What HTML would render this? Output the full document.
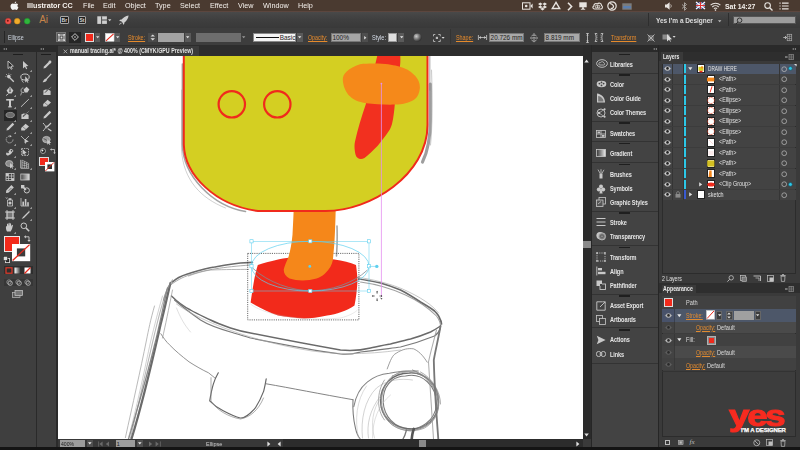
<!DOCTYPE html><html><head><meta charset="utf-8"><style>
*{margin:0;padding:0;box-sizing:border-box}
html,body{width:800px;height:450px;overflow:hidden;background:#161616;font-family:"Liberation Sans",sans-serif;}
.a{position:absolute}
.t{line-height:1;white-space:nowrap}
svg{position:absolute;overflow:visible}
</style></head><body>
<div class="a" style="left:0px;top:0px;width:800px;height:11px;background:#4a3a30"></div>
<div class="a" style="left:0px;top:11px;width:800px;height:17px;background:linear-gradient(#4a4a4a,#3f3f3f 50%,#393939)"></div>
<div class="a" style="left:0px;top:10.5px;width:800px;height:1px;background:#5c463e"></div>
<div class="a" style="left:0px;top:27.5px;width:800px;height:0.8px;background:#2a2a2a"></div>
<div class="a" style="left:0px;top:28px;width:800px;height:17px;background:#3d3d3d"></div>
<div class="a" style="left:0px;top:45px;width:800px;height:7px;background:#2a2a2a"></div>
<div class="a" style="left:0px;top:52px;width:35.5px;height:395px;background:#3f3f3f"></div>
<div class="a" style="left:35.5px;top:52px;width:1.5px;height:395px;background:#2a2a2a"></div>
<div class="a" style="left:37px;top:52px;width:19px;height:395px;background:#3f3f3f"></div>
<div class="a" style="left:56px;top:45px;width:1.5px;height:402px;background:#2a2a2a"></div>
<div class="a" style="left:57.5px;top:45px;width:525.5px;height:11px;background:#2d2d2d"></div>
<div class="a" style="left:57.6px;top:46.2px;width:141.4px;height:9.8px;background:#3b3b3b"></div>
<svg style="left:62.6px;top:48.6px" width="5" height="5"><path d="M.6 .6 L4.2 4.2 M4.2 .6 L.6 4.2" stroke="#bdbdbd" stroke-width=".8"/></svg>
<div class="a t" style="left:70px;top:48.1px;font-size:6.5px;color:#e2e2e2;font-weight:bold;transform:scaleX(.82);transform-origin:0 0">manual tracing.ai* @ 400% (CMYK/GPU Preview)</div>
<div class="a" id="canvas" style="left:57.5px;top:56px;width:525.5px;height:383px;background:#fff;overflow:hidden">
<svg style="left:0;top:0" width="525.5" height="383" viewBox="57.5 56 525.5 383">
<defs><filter id="soft" x="-5%" y="-5%" width="110%" height="110%"><feGaussianBlur stdDeviation="0.45"/></filter></defs>
<g filter="url(#soft)">
<path d="M429.8 84 V120 C429.8 138 428 150 422 162" fill="none" stroke="#6a6a6a" stroke-width="3.12" stroke-opacity="0.65" stroke-linecap="round"/>
<path d="M429.3 56 V90" fill="none" stroke="#888" stroke-width="1.30" stroke-opacity="0.6" stroke-linecap="round"/>
<path d="M431 70 C432 100 432 125 430 145" fill="none" stroke="#999" stroke-width="1.04" stroke-opacity="0.5" stroke-linecap="round"/>
<path d="M181.9 64 V144.5 C182.6 176 212 206 245 211.5" fill="none" stroke="#666" stroke-width="1.56" stroke-opacity="0.6" stroke-linecap="round"/>
<path d="M181 90 V150 C183 180 200 198 225 208" fill="none" stroke="#999" stroke-width="0.91" stroke-opacity="0.5" stroke-linecap="round"/>
<path d="M172 282 C178 276 184 275 190 273 C200 270 207 268 214 267 C225 265 233 263.5 240 263 L252 262.4" fill="none" stroke="#6a6a6a" stroke-width="1.56" stroke-opacity="1" stroke-linecap="round"/>
<path d="M170 285 C178 279 185 276 192 274 C205 270 222 267 250 265" fill="none" stroke="#8a8a8a" stroke-width="0.91" stroke-opacity="0.8" stroke-linecap="round"/>
<path d="M188 276 C196 273 203 271 210 270 C225 269.5 238 269.4 248 269.4" fill="none" stroke="#9a9a9a" stroke-width="0.91" stroke-opacity="0.8" stroke-linecap="round"/>
<path d="M358 279 C366 280 373 281.5 380 283 C387 285 394 287.5 400 290 C408 294 414 298 420 302 C426 305.5 431 308.5 434 311 C437 314 438.5 316 439 318 C440.5 320.5 441 322 441 324" fill="none" stroke="#6a6a6a" stroke-width="1.69" stroke-opacity="1" stroke-linecap="round"/>
<path d="M360 282 C375 284 392 289 405 295 C418 301 428 308 436 316 C439 320 440.5 324 440 328" fill="none" stroke="#888" stroke-width="1.04" stroke-opacity="0.8" stroke-linecap="round"/>
<path d="M355 277 C372 279 390 284 402 289 C420 297 432 305 438 313" fill="none" stroke="#999" stroke-width="0.78" stroke-opacity="0.7" stroke-linecap="round"/>
<path d="M171 296 C176 301 182 306 190 310 C197 314 204 317 210 320 C216 323 223 325.5 230 328 C236 330 244 332 250 333 C270 337 300 343 340 350 C350 351 360 350.5 370 348 C377 346.5 383 345 390 344 C397 342 404 340.5 410 339 C417 337 424 334.5 430 332 C434 330 437 328 440 326" fill="none" stroke="#6a6a6a" stroke-width="1.43" stroke-opacity="1" stroke-linecap="round"/>
<path d="M174 300 C182 307 190 313 200 320 C208 325 218 328.5 230 332 C236 334 244 336 250 338 C275 343 310 350 340 354 C350 355 356 353 360 352 C375 350.5 388 348.5 400 347 C412 344 424 340 434 336 C437 334 439 331 440 328" fill="none" stroke="#7a7a7a" stroke-width="1.17" stroke-opacity="1" stroke-linecap="round"/>
<path d="M176 304 C195 318 240 338 300 349 C330 355 365 355 400 350" fill="none" stroke="#aaa" stroke-width="0.78" stroke-opacity="0.8" stroke-linecap="round"/>
<path d="M170 283 C167 295 164 310 160 325 C152 360 143 400 131 438.8" fill="none" stroke="#6a6a6a" stroke-width="2.21" stroke-opacity="1" stroke-linecap="round"/>
<path d="M167 288 C163 305 158 330 154 345 C147 375 138 405 128 439" fill="none" stroke="#7a7a7a" stroke-width="1.30" stroke-opacity="0.9" stroke-linecap="round"/>
<path d="M154 306 C150 320 148 330 146 340 C140 370 132 405 124.9 437.6" fill="none" stroke="#aaa" stroke-width="0.91" stroke-opacity="0.9" stroke-linecap="round"/>
<path d="M172 290 C168 310 165 325 162 338" fill="none" stroke="#999" stroke-width="0.91" stroke-opacity="0.8" stroke-linecap="round"/>
<path d="M168 286 C162 300 158 318 154 334 C148 360 140 395 130 438" fill="none" stroke="#888" stroke-width="1.04" stroke-opacity="0.6" stroke-linecap="round"/>
<path d="M162 296 C158 310 154 325 150 342 C145 365 138 400 128 438" fill="none" stroke="#aaa" stroke-width="0.91" stroke-opacity="0.6" stroke-linecap="round"/>
<path d="M172 280 C168 286 165 292 163 300" fill="none" stroke="#888" stroke-width="1.30" stroke-opacity="0.7" stroke-linecap="round"/>
<path d="M160.3 333.7 C163 338 166 342 168.9 344.7 C175 351 181 356 188.5 361.8 C195 366 202 370 208 372.8 L214.1 377.7" fill="none" stroke="#888" stroke-width="0.91" stroke-opacity="1" stroke-linecap="round"/>
<path d="M176 308 C180 318 184 325 190 332" fill="none" stroke="#bbb" stroke-width="0.65" stroke-opacity="0.7" stroke-linecap="round"/>
<path d="M217.8 372.8 C216 376 214 380 212.9 383.8 C211 390 210 396 209.2 400.9 C213 405 217 408 222.7 410.7 C228 413.5 234 416.5 239.8 418 C245 418.5 250 413 254.7 408.2 C258 403 261 397 263.2 391.1 C264.5 386 265.2 382 265.7 378.9" fill="none" stroke="#666" stroke-width="1.17" stroke-opacity="1" stroke-linecap="round"/>
<path d="M210.5 377.7 C210.5 385 210.5 393 210.5 400.9 C216 410 228 417 240 419 C250 417 258 410 263 398" fill="none" stroke="#8a8a8a" stroke-width="0.78" stroke-opacity="0.9" stroke-linecap="round"/>
<path d="M265.7 383.8 C290 388 320 394 352.5 399.7" fill="none" stroke="#777" stroke-width="0.91" stroke-opacity="1" stroke-linecap="round"/>
<path d="M409 373 C425 372 438 385 438 402 C438 418 425 430 409 429 C392 428 380 416 380 401 C380 385 392 373 409 373Z" fill="none" stroke="#5a5a5a" stroke-width="1.30" stroke-opacity="0.9" stroke-linecap="round"/>
<path d="M405 376 C422 372 436 386 436 404 C435 420 420 432 404 428 C390 425 381 412 383 396 C385 382 395 376 405 376Z" fill="none" stroke="#6a6a6a" stroke-width="1.04" stroke-opacity="0.9" stroke-linecap="round"/>
<path d="M412 370 C428 376 440 392 437 410 C434 424 420 432 405 430" fill="none" stroke="#777" stroke-width="0.91" stroke-opacity="0.9" stroke-linecap="round"/>
<path d="M400 372 C388 376 378 392 382 410 C386 424 396 430 410 431" fill="none" stroke="#888" stroke-width="0.78" stroke-opacity="0.8" stroke-linecap="round"/>
<path d="M352.5 399.7 C352 410 353 420 354.9 427.8 C356 433 358 437 359.8 439" fill="none" stroke="#777" stroke-width="1.04" stroke-opacity="1" stroke-linecap="round"/>
<path d="M353.3 406.7 C356 392 362 386 366.7 382.2 C374 376 382 374 388.9 373.3 C400 371 410 371 417.8 371.1" fill="none" stroke="#777" stroke-width="1.04" stroke-opacity="0.9" stroke-linecap="round"/>
<path d="M386.7 368.9 C390 360 392 355 395.6 353.3 C402 349 408 348 413.3 348.9 C420 352 424 358 426.7 362.2" fill="none" stroke="#888" stroke-width="0.91" stroke-opacity="0.9" stroke-linecap="round"/>
<path d="M362 438 C360 420 364 400 376 388 C386 380 400 378 412 380" fill="none" stroke="#aaa" stroke-width="0.65" stroke-opacity="0.8" stroke-linecap="round"/>
<path d="M392 376 C405 368 425 372 434 388 C442 404 438 420 424 428 C410 434 392 430 384 416 C378 404 380 386 392 376Z" fill="none" stroke="#8a8a8a" stroke-width="0.91" stroke-opacity="0.8" stroke-linecap="round"/>
<path d="M398 372 C415 366 433 378 438 396 C441 414 430 428 412 430 C396 430 384 420 381 404" fill="none" stroke="#999" stroke-width="0.78" stroke-opacity="0.8" stroke-linecap="round"/>
<path d="M384 380 C376 392 376 410 384 420 M420 372 C432 378 440 392 440 404" fill="none" stroke="#777" stroke-width="0.78" stroke-opacity="0.8" stroke-linecap="round"/>
<path d="M358 438 C354 420 356 400 366 386 M374 438 C370 424 372 410 380 398" fill="none" stroke="#bbb" stroke-width="0.65" stroke-opacity="0.8" stroke-linecap="round"/>
<path d="M368 438 C366 425 369 410 380 396" fill="none" stroke="#aaa" stroke-width="0.65" stroke-opacity="0.8" stroke-linecap="round"/>
<path d="M372 438 C372 420 378 405 390 395" fill="none" stroke="#bbb" stroke-width="0.65" stroke-opacity="0.7" stroke-linecap="round"/>
<path d="M440 326 C438 338 435 350 433.3 360 C434 390 436 415 437.8 439" fill="none" stroke="#777" stroke-width="1.82" stroke-opacity="1" stroke-linecap="round"/>
<path d="M436 330 C433 342 430 352 428 362 C430 395 432 420 433 439" fill="none" stroke="#999" stroke-width="1.04" stroke-opacity="0.8" stroke-linecap="round"/>
<path d="M413.3 428.9 C412 432 411.5 436 411.1 440" fill="none" stroke="#555" stroke-width="2.60" stroke-opacity="1" stroke-linecap="round"/>
<path d="M406 430 C405 434 404 437 402 440" fill="none" stroke="#777" stroke-width="1.30" stroke-opacity="1" stroke-linecap="round"/>
</g>
<path d="M336.5 226 C336.8 235 336.8 245 336 256" fill="none" stroke="#666" stroke-width="1.56" stroke-opacity="0.6" stroke-linecap="round"/>
<path d="M257.3 265 C270 261 280 258.5 290 257.5 C305 256.5 320 257.5 334 259.5 C342 260.5 350 262.5 355.5 265 C356.5 272 357 278 357 281 C356.5 290 355.5 298 354 305.4 C346 311 336 314 326.6 315.5 C318 317.5 310 318.4 303.5 318.4 C294 318 285 317 277.5 315.5 C268 312 258 307 250.1 302.5 C251 296 252 290 253 283.8 C254 277 255.5 271 257.3 265Z" fill="#f22a1b"/>
<rect x="247.2" y="253.4" width="111.2" height="66.5" fill="none" stroke="#222" stroke-width=".7" stroke-dasharray="1.1 1.1"/>
<path d="M293.4 205 C293 215 292.5 225 292 234.7 C291 245 289.5 252 287.7 257.8 C286 262 284 266 283.3 269.3 C283 273 285 276.5 289 278.5 C295 280.5 302 280.8 309 280 C316 279 321 277 325 273 C329 269 331.5 265 332.4 260 C333 253 333.5 248 333.9 243.3 C334.5 232 335 220 335.3 205Z" fill="#f5871a"/>
<path d="M183.3 40 V144.5 C184 175 215 205.5 257.5 211 H325 C370 211 427 175 427 125 V40Z" fill="#d4cf22" stroke="#f02a1c" stroke-width="2"/>
<circle cx="231.3" cy="104.3" r="13.2" fill="none" stroke="#f02a1c" stroke-width="2.2"/>
<circle cx="276.8" cy="104.3" r="13.2" fill="none" stroke="#f02a1c" stroke-width="2.2"/>
<path d="M378 50 L399.5 50 C400 58 400 62 399.5 66 L394.3 104.3 C393.8 110 393 118 391.5 124 C390.5 127 389.5 129.5 388 131.5 C385 136 381 141 377 146 C372 151 368 155 364 158 C360 160.5 356 158.5 355 154.5 C353.8 149 353.8 145 354.4 142 C357 130 361 117 365.3 104.3 L367 96 C370 82 375 65 378 50Z" fill="#f2301f"/>
<path d="M342.3 79.4 C342 74 348 68 359.5 64.2 C365 63.5 372 63.5 377.8 63.6 C388 64 394 65.5 398.6 66.6 C405 68.5 410 71 413.2 74.6 C417 78 419.5 82 419.4 88 C419 93 417 97 414.5 99 C410 102.5 403 104.5 393.7 104.6 C384 104.8 374 104.2 365.6 103.3 C358 102 353 100 349.7 96.6 C345 92 342.6 86 342.3 79.4Z" fill="#f5891a"/>
<path d="M252 268 C268 283 292 290.5 310 290.8 C330 290.5 352 284 367 270" fill="none" stroke="#7d8c96" stroke-width=".8"/>
<path d="M250 304 C262 314 300 322 340 318 C348 316 354 313 357 310" fill="none" stroke="#b8b8b8" stroke-width=".6" stroke-opacity=".5"/>
<ellipse cx="309.8" cy="266.2" rx="58.8" ry="24.9" fill="none" stroke="#5fd0ef" stroke-width=".7"/>
<rect x="251" y="241.3" width="117.5" height="49.7" fill="none" stroke="#5fd0ef" stroke-width=".6" stroke-opacity=".85"/>
<rect x="249.4" y="239.70000000000002" width="3.2" height="3.2" fill="#fff" stroke="#5fd0ef" stroke-width=".6"/>
<rect x="308.2" y="239.70000000000002" width="3.2" height="3.2" fill="#fff" stroke="#5fd0ef" stroke-width=".6"/>
<rect x="366.9" y="239.70000000000002" width="3.2" height="3.2" fill="#fff" stroke="#5fd0ef" stroke-width=".6"/>
<rect x="249.4" y="264.59999999999997" width="3.2" height="3.2" fill="#fff" stroke="#5fd0ef" stroke-width=".6"/>
<rect x="366.9" y="264.59999999999997" width="3.2" height="3.2" fill="#fff" stroke="#5fd0ef" stroke-width=".6"/>
<rect x="249.4" y="289.4" width="3.2" height="3.2" fill="#fff" stroke="#5fd0ef" stroke-width=".6"/>
<rect x="308.2" y="289.4" width="3.2" height="3.2" fill="#fff" stroke="#5fd0ef" stroke-width=".6"/>
<rect x="366.9" y="289.4" width="3.2" height="3.2" fill="#fff" stroke="#5fd0ef" stroke-width=".6"/>
<circle cx="309.3" cy="266.4" r="1.4" fill="#5fd0ef"/>
<path d="M368.5 266.4 H375" stroke="#5fd0ef" stroke-width=".6"/><circle cx="376.3" cy="266.4" r="1.7" fill="#5fd0ef"/>
<path d="M380.9 83.4 V297" stroke="#e58ff0" stroke-width=".8"/><circle cx="380.9" cy="83.6" r=".9" fill="#e58ff0"/>
<g stroke="#333" stroke-width=".6"><path d="M376.6 291.5 V293.8 M376.6 298.2 V300.5 M372 296 H374.3 M378.9 296 H381.2"/></g><path d="M376.6 290.8 L375.7 292.2 H377.5Z M376.6 301.2 L375.7 299.8 H377.5Z M371.3 296 L372.7 295.1 V296.9Z M381.9 296 L380.5 295.1 V296.9Z" fill="#333"/><path d="M379.6 297.6 L382 298.8 L381 299.6Z" fill="#333"/>
</svg>
</div>
<div class="a" style="left:583px;top:45px;width:8px;height:394px;background:#2b2b2b"></div>
<div class="a" style="left:57.5px;top:439px;width:525.5px;height:8px;background:#383838"></div>
<div class="a" style="left:583px;top:439px;width:8px;height:8px;background:#3a3a3a"></div>
<div class="a" style="left:0px;top:447px;width:800px;height:3px;background:#141414"></div>
<div class="a" style="left:591px;top:45px;width:1px;height:402px;background:#262626"></div>
<div class="a" style="left:592px;top:52px;width:66px;height:395px;background:#434343"></div>
<div class="a" style="left:658px;top:45px;width:1px;height:402px;background:#262626"></div>
<div class="a" style="left:659px;top:52px;width:141px;height:395px;background:#3a3a3a"></div>
<svg style="left:10px;top:1px" width="9" height="10" viewBox="0 0 9 10"><path d="M4.6 2.3 C4.6 1.3 5.3 .5 6.2 .4 C6.3 1.4 5.5 2.3 4.6 2.3Z M4.5 2.8 C5.2 2.8 5.7 2.4 6.4 2.4 C7.1 2.4 7.8 2.8 8.1 3.4 C7.2 3.9 7.1 5.6 8.4 6.2 C8.1 7.2 7.4 8.9 6.4 8.9 C5.7 8.9 5.4 8.5 4.6 8.5 C3.8 8.5 3.4 8.9 2.8 8.9 C1.7 8.9 .5 7 .5 5.3 C.5 3.6 1.6 2.5 2.7 2.5 C3.4 2.5 3.9 2.8 4.5 2.8Z" fill="#f4f4f4"/></svg>
<div class="a t" style="left:27.1px;top:2.0px;font-size:7.6px;color:#f4f0ec;font-weight:bold;transform:scaleX(.95);transform-origin:0 0">Illustrator CC</div>
<div class="a t" style="left:82.8px;top:2.0px;font-size:7.6px;color:#f4f0ec;font-weight:normal;transform:scaleX(.95);transform-origin:0 0">File</div>
<div class="a t" style="left:103px;top:2.0px;font-size:7.6px;color:#f4f0ec;font-weight:normal;transform:scaleX(.95);transform-origin:0 0">Edit</div>
<div class="a t" style="left:124.6px;top:2.0px;font-size:7.6px;color:#f4f0ec;font-weight:normal;transform:scaleX(.95);transform-origin:0 0">Object</div>
<div class="a t" style="left:155.4px;top:2.0px;font-size:7.6px;color:#f4f0ec;font-weight:normal;transform:scaleX(.95);transform-origin:0 0">Type</div>
<div class="a t" style="left:180.3px;top:2.0px;font-size:7.6px;color:#f4f0ec;font-weight:normal;transform:scaleX(.95);transform-origin:0 0">Select</div>
<div class="a t" style="left:210px;top:2.0px;font-size:7.6px;color:#f4f0ec;font-weight:normal;transform:scaleX(.95);transform-origin:0 0">Effect</div>
<div class="a t" style="left:237.9px;top:2.0px;font-size:7.6px;color:#f4f0ec;font-weight:normal;transform:scaleX(.95);transform-origin:0 0">View</div>
<div class="a t" style="left:263.2px;top:2.0px;font-size:7.6px;color:#f4f0ec;font-weight:normal;transform:scaleX(.95);transform-origin:0 0">Window</div>
<div class="a t" style="left:298px;top:2.0px;font-size:7.6px;color:#f4f0ec;font-weight:normal;transform:scaleX(.95);transform-origin:0 0">Help</div>
<svg style="left:522px;top:2px" width="11" height="8" viewBox="0 0 11 8"><rect x=".5" y=".8" width="7.5" height="6.4" fill="none" stroke="#e8e4e0" stroke-width="1"/><circle cx="4.2" cy="4" r="1.3" fill="#e8e4e0"/><path d="M8.3 4 L10.6 1.6 V6.4Z" fill="#e8e4e0"/></svg>
<svg style="left:537.5px;top:1.5px" width="9" height="9" viewBox="0 0 9 9"><path d="M2.3 .5 L4.5 2 L2.3 3.5 L0 2Z M6.7 .5 L9 2 L6.7 3.5 L4.5 2Z M2.3 3.5 L4.5 5 L2.3 6.5 L0 5Z M6.7 3.5 L9 5 L6.7 6.5 L4.5 5Z M4.5 5.6 L6.6 7 L4.5 8.4 L2.4 7Z" fill="#e8e4e0"/></svg>
<svg style="left:551.5px;top:2px" width="8" height="7" viewBox="0 0 8 7"><path d="M4 .3 L7.7 6.5 H.3Z" fill="none" stroke="#e8e4e0" stroke-width="1.4"/></svg>
<svg style="left:566.5px;top:1.5px" width="6" height="9" viewBox="0 0 6 9"><path d="M1 .8 L4.6 4.5 L1 8.2" fill="none" stroke="#e8e4e0" stroke-width="1.6"/></svg>
<svg style="left:578.5px;top:2px" width="8" height="8" viewBox="0 0 8 8"><rect x=".3" y=".3" width="7.4" height="5" fill="#e8e4e0"/><rect x="3" y="5.3" width="2" height="1.6" fill="#e8e4e0"/><rect x="1.8" y="6.8" width="4.4" height=".9" fill="#e8e4e0"/></svg>
<svg style="left:591.5px;top:2px" width="11" height="8" viewBox="0 0 11 8"><path d="M2.5 7 C.6 7 .3 4.6 1.8 3.9 C1.8 1.8 4 .8 5.4 2 C6.6 .4 9.6 1 9.5 3.6 C11 4.2 10.6 7 8.7 7Z" fill="none" stroke="#e8e4e0" stroke-width="1.1"/><circle cx="4.6" cy="4.6" r="1.3" fill="none" stroke="#e8e4e0" stroke-width=".9"/><circle cx="6.6" cy="4.6" r="1.3" fill="none" stroke="#e8e4e0" stroke-width=".9"/></svg>
<svg style="left:607px;top:1.2px" width="10" height="10" viewBox="0 0 10 10"><circle cx="5" cy="5" r="4.2" fill="none" stroke="#e8e4e0" stroke-width="1.2"/><path d="M3 2.5 C5 3 6.5 3.5 6.5 5.5 C6.5 7 5 7.8 3.6 7.2" fill="none" stroke="#e8e4e0" stroke-width="1.2"/></svg>
<svg style="left:622px;top:2.5px" width="10" height="7" viewBox="0 0 10 7"><rect x=".3" y=".3" width="9.4" height="6.4" fill="#7c7c7c"/><rect x="1.2" y="3" width="7.6" height="2.4" fill="#5b7fb0"/></svg>
<svg style="left:665px;top:2px" width="7" height="8" viewBox="0 0 7 8"><path d="M0 2.6 H1.8 L4.6 .3 V7.7 L1.8 5.4 H0Z" fill="#e8e4e0"/><path d="M5.6 2.4 C6.4 3.2 6.4 4.8 5.6 5.6" fill="none" stroke="#e8e4e0" stroke-width=".7"/></svg>
<svg style="left:681px;top:1.5px" width="7" height="9" viewBox="0 0 7 9"><path d="M1 2.5 L5.5 6.5 L3.5 8.3 V.7 L5.5 2.5 L1 6.5" fill="none" stroke="#a9a49f" stroke-width="1"/></svg>
<svg style="left:696px;top:2.2px" width="9" height="7" viewBox="0 0 9 7"><rect width="9" height="7" fill="#2c3a7a"/><path d="M0 0 L9 7 M9 0 L0 7" stroke="#fff" stroke-width="1.3"/><path d="M4.5 0 V7 M0 3.5 H9" stroke="#fff" stroke-width="2"/><path d="M4.5 0 V7 M0 3.5 H9" stroke="#d33" stroke-width="1.1"/></svg>
<svg style="left:710px;top:1.5px" width="11" height="9" viewBox="0 0 11 9"><path d="M.6 3.2 A7 7 0 0 1 10.4 3.2" fill="none" stroke="#e8e4e0" stroke-width="1.1"/><path d="M2.3 5 A4.6 4.6 0 0 1 8.7 5" fill="none" stroke="#e8e4e0" stroke-width="1.1"/><path d="M3.9 6.7 A2.2 2.2 0 0 1 7.1 6.7" fill="none" stroke="#e8e4e0" stroke-width="1.1"/><circle cx="5.5" cy="8.1" r=".8" fill="#e8e4e0"/></svg>
<div class="a t" style="left:725px;top:2.5px;font-size:7.6px;color:#f6f2ee;font-weight:bold;transform:scaleX(.91);transform-origin:0 0">Sat 14:27</div>
<svg style="left:764px;top:1.5px" width="9" height="9" viewBox="0 0 9 9"><circle cx="3.6" cy="3.6" r="2.8" fill="none" stroke="#e8e4e0" stroke-width="1.1"/><path d="M5.7 5.7 L8.5 8.5" stroke="#e8e4e0" stroke-width="1.3"/></svg>
<svg style="left:779px;top:2px" width="10" height="8" viewBox="0 0 10 8"><path d="M.5 1.2 H1.6 M3 1.2 H9.6 M.5 4 H1.6 M3 4 H9.6 M.5 6.8 H1.6 M3 6.8 H9.6" stroke="#e8e4e0" stroke-width="1.2"/></svg>
<svg style="left:4.5px;top:17.6px" width="6.4" height="6.4" viewBox="0 0 6.4 6.4"><circle cx="3.2" cy="3.2" r="2.9" fill="#f0524b" stroke="#b8312b" stroke-width=".5"/></svg>
<svg style="left:14.3px;top:17.6px" width="6.4" height="6.4" viewBox="0 0 6.4 6.4"><circle cx="3.2" cy="3.2" r="2.9" fill="#f0ab2c" stroke="#c07e12" stroke-width=".5"/></svg>
<svg style="left:24.3px;top:17.6px" width="6.4" height="6.4" viewBox="0 0 6.4 6.4"><circle cx="3.2" cy="3.2" r="2.9" fill="#2fb63c" stroke="#1d8a28" stroke-width=".5"/></svg>
<svg style="left:5.9px;top:19.1px" width="3.6" height="3.6"><circle cx="1.8" cy="1.8" r="1" fill="#7a1510"/></svg>
<div class="a t" style="left:39.2px;top:14.6px;font-size:10px;color:#c8844a;">Ai</div>
<div class="a" style="left:60px;top:16px;width:8.6px;height:8px;border:1px solid #a6a6a6;background:#1f1f1f;border-radius:1px"></div>
<div class="a t" style="left:61.6px;top:17.6px;font-size:5px;color:#d8d8d8;font-weight:bold">Br</div>
<div class="a" style="left:77.9px;top:16px;width:8.6px;height:8px;border:1px solid #a6a6a6;background:#1f1f1f;border-radius:1px"></div>
<div class="a t" style="left:79.5px;top:17.6px;font-size:5px;color:#d8d8d8;font-weight:bold">St</div>
<svg style="left:97px;top:16px" width="15" height="9" viewBox="0 0 15 9"><rect x=".3" y=".3" width="9.6" height="7.6" fill="#cfcfcf"/><path d="M4.6 .3 V8 M5 4 H10" stroke="#3a3a3a" stroke-width=".9"/><path d="M11 3.2 H14.4 L12.7 5.2Z" fill="#d0d0d0"/></svg>
<svg style="left:119px;top:15px" width="10" height="10" viewBox="0 0 10 10"><path d="M9.6 .4 C6.5 .8 4.2 2.4 2.6 4.6 L1 4.8 L.3 6 L2.2 6.3 L3.8 7.9 L4.1 9.7 L5.2 9 L5.4 7.4 C7.6 5.8 9.2 3.5 9.6 .4Z" fill="#cfcfcf"/><path d="M.4 9.6 L2 7.6 M1.2 9.3 L2.4 8.1" stroke="#cfcfcf" stroke-width=".7"/></svg>
<div class="a" style="left:648px;top:13px;width:0.8px;height:13px;background:#2e2e2e"></div>
<div class="a t" style="left:656px;top:16.6px;font-size:7px;color:#dedede;font-weight:bold;letter-spacing:-.05px;transform:scaleX(.93);transform-origin:0 0">Yes I’m a Designer</div>
<svg style="left:718px;top:19.5px" width="4" height="3"><path d="M0 .3 H3.4 L1.7 2.2Z" fill="#bdbdbd"/></svg>
<div class="a" style="left:728px;top:13px;width:0.8px;height:13px;background:#2e2e2e"></div>
<div class="a" style="left:733px;top:16px;width:63px;height:8.4px;background:#9d9d9d;border:0.8px solid #555;"></div>
<svg style="left:734.5px;top:16.6px" width="8" height="8" viewBox="0 0 8 8"><circle cx="4.6" cy="3.3" r="2.3" fill="none" stroke="#2a2a2a" stroke-width=".9"/><path d="M2.9 5 L.8 7.2" stroke="#2a2a2a" stroke-width="1"/></svg>
<div class="a" style="left:4px;top:30.5px;width:0.9px;height:12px;background:#262626"></div>
<div class="a t" style="left:8px;top:34.6px;font-size:6.8px;color:#cfd6e0;transform:scaleX(.78);transform-origin:0 0">Ellipse</div>
<div class="a" style="left:56px;top:32px;width:10px;height:10px;background:#5a5a5a;border:0.7px solid #777"></div>
<svg style="left:57.5px;top:33.5px" width="7" height="7" viewBox="0 0 7 7"><rect x="1" y="1" width="5" height="5" fill="none" stroke="#d8d8d8" stroke-width=".9"/><rect x="0" y="0" width="1.6" height="1.6" fill="#d8d8d8"/><rect x="5.4" y="0" width="1.6" height="1.6" fill="#d8d8d8"/><rect x="0" y="5.4" width="1.6" height="1.6" fill="#d8d8d8"/><rect x="5.4" y="5.4" width="1.6" height="1.6" fill="#d8d8d8"/><circle cx="3.5" cy="3.5" r=".9" fill="#d8d8d8"/></svg>
<div class="a" style="left:68.5px;top:31.5px;width:12px;height:11px;background:#252525"></div>
<svg style="left:70.5px;top:33px" width="8" height="8" viewBox="0 0 8 8"><path d="M4 .6 L7.4 4 L4 7.4 L.6 4Z" fill="none" stroke="#d8d8d8" stroke-width=".9"/><circle cx="4" cy="4" r=".8" fill="#d8d8d8"/></svg>
<div class="a" style="left:85px;top:33px;width:9.4px;height:8.6px;background:#f02a1c;border:0.6px solid #ddd"></div>
<div class="a" style="left:95.2px;top:33px;width:5px;height:8.6px;background:#5a5a5a"></div>
<svg style="left:96px;top:36px" width="4" height="3"><path d="M0 .2 H3.4 L1.7 2.2Z" fill="#e0e0e0"/></svg>
<svg style="left:105px;top:33px" width="9.4" height="8.6" viewBox="0 0 9.4 8.6"><rect x=".3" y=".3" width="8.8" height="8" fill="#fff" stroke="#ccc" stroke-width=".6"/><path d="M1 7.8 L8.6 .8" stroke="#e82a1c" stroke-width="1.1"/></svg>
<div class="a" style="left:115.2px;top:33px;width:5px;height:8.6px;background:#5a5a5a"></div>
<svg style="left:116px;top:36px" width="4" height="3"><path d="M0 .2 H3.4 L1.7 2.2Z" fill="#e0e0e0"/></svg>
<div class="a t" style="left:127.6px;top:35px;font-size:6.6px;color:#e58a2c;text-decoration:underline;text-decoration-thickness:.5px;text-underline-offset:1px;transform:scaleX(.82);transform-origin:0 0">Stroke:</div>
<div class="a" style="left:148px;top:33px;width:8.5px;height:8.6px;background:#4a4a4a"></div>
<svg style="left:149.5px;top:34px" width="6" height="7"><path d="M.5 2.6 H5 L2.75 .4Z M.5 4.2 H5 L2.75 6.4Z" fill="#dcdcdc"/></svg>
<div class="a" style="left:157.8px;top:33px;width:26px;height:8.6px;background:#a3a3a3"></div>
<div class="a" style="left:185px;top:33px;width:5.6px;height:8.6px;background:#5a5a5a"></div>
<svg style="left:186.2px;top:36px" width="4" height="3"><path d="M0 .2 H3.4 L1.7 2.2Z" fill="#e8e8e8"/></svg>
<div class="a" style="left:196px;top:33px;width:44.5px;height:8.6px;background:#6d6d6d"></div>
<svg style="left:242px;top:36.3px" width="4" height="3"><path d="M0 .2 H3.4 L1.7 2.2Z" fill="#9a9a9a"/></svg>
<div class="a" style="left:253px;top:32.5px;width:43px;height:9.6px;background:#f4f4f4;border:0.6px solid #888"></div>
<div class="a" style="left:255.5px;top:36.8px;width:23px;height:1.3px;background:#111"></div>
<div class="a t" style="left:279.8px;top:35.3px;font-size:6.4px;color:#222;">Basic</div>
<div class="a" style="left:297px;top:33px;width:5.6px;height:8.6px;background:#5a5a5a"></div>
<svg style="left:298.2px;top:36px" width="4" height="3"><path d="M0 .2 H3.4 L1.7 2.2Z" fill="#e8e8e8"/></svg>
<div class="a t" style="left:307.6px;top:35px;font-size:6.6px;color:#e58a2c;text-decoration:underline;text-decoration-thickness:.5px;text-underline-offset:1px;transform:scaleX(.8);transform-origin:0 0">Opacity:</div>
<div class="a" style="left:331px;top:33px;width:30px;height:8.6px;background:#a6a6a6;border:0.6px solid #777"></div>
<div class="a t" style="left:332.4px;top:35.2px;font-size:6.5px;color:#1e1e1e;">100%</div>
<div class="a" style="left:362px;top:33px;width:6px;height:8.6px;background:#4e4e4e"></div>
<svg style="left:363.8px;top:35.5px" width="3" height="4"><path d="M.2 0 V3.4 L2.4 1.7Z" fill="#e0e0e0"/></svg>
<div class="a t" style="left:371.8px;top:35px;font-size:6.6px;color:#d6dde8;transform:scaleX(.85);transform-origin:0 0">Style:</div>
<div class="a" style="left:388px;top:33px;width:9px;height:8.6px;background:#e0e0e0;border:0.6px solid #999"></div>
<div class="a" style="left:398.4px;top:33px;width:5.6px;height:8.6px;background:#5a5a5a"></div>
<svg style="left:399.6px;top:36px" width="4" height="3"><path d="M0 .2 H3.4 L1.7 2.2Z" fill="#e8e8e8"/></svg>
<svg style="left:413px;top:33px" width="9" height="9" viewBox="0 0 9 9"><defs><radialGradient id="gl" cx=".35" cy=".35" r=".7"><stop offset="0" stop-color="#cfcfcf"/><stop offset=".6" stop-color="#6a6a6a"/><stop offset="1" stop-color="#2e2e2e"/></radialGradient></defs><circle cx="4.5" cy="4.5" r="4" fill="url(#gl)"/></svg>
<svg style="left:433px;top:33.5px" width="12" height="8" viewBox="0 0 12 8"><path d="M.5 .5 H2.3 M5.3 .5 H7.3 M.5 7.5 H2.3 M5.3 7.5 H7.3 M.5 .5 V2.3 M.5 5.5 V7.5 M7.3 .5 V2.3 M7.3 5.5 V7.5" stroke="#bbb" stroke-width=".9"/><rect x="2.8" y="2.8" width="2.2" height="2.2" fill="#bbb"/><path d="M8.6 3 H11.6 L10.1 4.8Z" fill="#ddd"/></svg>
<div class="a" style="left:450px;top:29px;width:0.8px;height:15px;background:#333"></div>
<div class="a t" style="left:455.6px;top:35px;font-size:6.6px;color:#e58a2c;text-decoration:underline;text-decoration-thickness:.5px;text-underline-offset:1px;transform:scaleX(.82);transform-origin:0 0">Shape:</div>
<svg style="left:477.5px;top:35px" width="9" height="5" viewBox="0 0 9 5"><path d="M.4 0 V5 M8.6 0 V5 M1 2.5 H8" stroke="#ccc" stroke-width=".8"/><path d="M1 2.5 L2.8 1 V4Z M8 2.5 L6.2 1 V4Z" fill="#ccc"/></svg>
<div class="a" style="left:489px;top:33px;width:35.4px;height:8.6px;background:#a8a8a8;border:0.6px solid #777"></div>
<div class="a t" style="left:490.6px;top:35.2px;font-size:6.4px;color:#1e1e1e;">20.726 mm</div>
<svg style="left:530px;top:32.5px" width="8" height="10" viewBox="0 0 8 10"><path d="M1.5 3 C3 1.5 5 1.5 6.5 3 M1.5 7 C3 8.5 5 8.5 6.5 7 M0 5 H8" stroke="#ccc" stroke-width=".8" fill="none"/><path d="M4 .2 V9.8" stroke="#ccc" stroke-width=".8" stroke-dasharray="1 1"/></svg>
<div class="a" style="left:544px;top:33px;width:36.4px;height:8.6px;background:#a8a8a8;border:0.6px solid #777"></div>
<div class="a t" style="left:545.6px;top:35.2px;font-size:6.4px;color:#1e1e1e;">8.819 mm</div>
<svg style="left:586px;top:32.5px" width="3" height="10" viewBox="0 0 3 10"><path d="M.2 .5 H2.8 M.2 9.5 H2.8 M1.5 .5 V9.5" stroke="#ccc" stroke-width=".8"/><path d="M1.5 1 L.3 2.6 H2.7Z M1.5 9 L.3 7.4 H2.7Z" fill="#ccc"/></svg>
<svg style="left:593.5px;top:33px" width="10" height="9" viewBox="0 0 10 9"><path d="M1 .5 C2.5 2 2.5 7 1 8.5 M9 .5 C7.5 2 7.5 7 9 8.5 M1 .5 H3 M1 8.5 H3 M9 .5 H7 M9 8.5 H7" stroke="#ccc" stroke-width=".8" fill="none"/><path d="M3 .5 V8.5 M7 .5 V8.5" stroke="#ccc" stroke-width=".6" stroke-dasharray="1 .8"/></svg>
<div class="a t" style="left:610.8px;top:35px;font-size:6.6px;color:#e58a2c;text-decoration:underline;text-decoration-thickness:.5px;text-underline-offset:1px;transform:scaleX(.85);transform-origin:0 0">Transform</div>
<svg style="left:647px;top:33.5px" width="8" height="8" viewBox="0 0 8 8"><path d="M.5 .5 L7.5 7.5 M7.5 .5 L.5 7.5" stroke="#bbb" stroke-width=".9"/><rect x="2" y="2" width="4" height="4" fill="none" stroke="#bbb" stroke-width=".7"/></svg>
<svg style="left:662px;top:33px" width="14" height="9" viewBox="0 0 14 9"><rect x=".5" y="1.5" width="7" height="5" fill="#8a8a8a"/><path d="M5 1 V8.6 L7 6.8 L8.4 8.8 L9 8.4 L7.8 6.4 L10 6.2Z" fill="#dadada"/><path d="M10.6 3 H13.6 L12.1 4.8Z" fill="#ddd"/></svg>
<svg style="left:783px;top:34px" width="9" height="7" viewBox="0 0 9 7"><rect x="4.2" y=".3" width="4.5" height="6.4" fill="none" stroke="#aaa" stroke-width=".7"/><path d="M4.2 2.4 H8.7 M4.2 4.5 H8.7 M6.4 .3 V6.7" stroke="#aaa" stroke-width=".5"/><path d="M.3 3.5 H3.5 L2 2 M3.5 3.5 L2 5" stroke="#ccc" stroke-width=".8" fill="none"/></svg>
<svg style="left:3px;top:47.6px" width="5" height="2.4"><path d="M.2 1.1 L1.7 .1 V2.1Z M2.4 1.1 L3.9 .1 V2.1Z" fill="#a8a8a8"/></svg>
<svg style="left:39.5px;top:47.6px" width="5" height="2.4"><path d="M.2 1.1 L1.7 .1 V2.1Z M2.4 1.1 L3.9 .1 V2.1Z" fill="#a8a8a8"/></svg>
<div class="a" style="left:13.3px;top:54px;width:9.4px;height:1.2px;background:#1e1e1e"></div>
<div class="a" style="left:41.3px;top:54px;width:10px;height:1.2px;background:#1e1e1e"></div>
<div class="a" style="left:4px;top:110px;width:13.3px;height:10.8px;background:#262626"></div>
<svg style="left:5.00px;top:60.30px" width="10" height="10" viewBox="0 0 10 10"><path d="M3 1 V8.6 L4.9 6.8 L6.2 9.3 L7.2 8.8 L6 6.3 L8.4 6.1Z" fill="#2a2a2a" stroke="#c9c9c9" stroke-width=".9"/></svg>
<svg style="left:20.30px;top:60.30px" width="10" height="10" viewBox="0 0 10 10"><path d="M3 1 V8.6 L4.9 6.8 L6.2 9.3 L7.2 8.8 L6 6.3 L8.4 6.1Z" fill="#c9c9c9"/></svg>
<svg style="left:29.50px;top:69.50px" width="2" height="2"><path d="M1.8 0 V1.8 H0Z" fill="#d0d0d0"/></svg>
<svg style="left:5.00px;top:73.00px" width="10" height="10" viewBox="0 0 10 10"><circle cx="3.8" cy="3.6" r="1.8" fill="#c9c9c9"/><path d="M1 1 L2.4 2.4 M3.8 .4 V1.4 M.4 3.6 H1.4 M6.2 1.2 L5.4 2" stroke="#c9c9c9" stroke-width=".7"/><path d="M4.5 4.5 L8.8 8.8" stroke="#c9c9c9" stroke-width="1.3"/></svg>
<svg style="left:20.30px;top:73.00px" width="10" height="10" viewBox="0 0 10 10"><ellipse cx="5" cy="4" rx="4.2" ry="3" fill="none" stroke="#c9c9c9" stroke-width="1"/><path d="M2 6 C1.5 8 3 9 3.5 9.6" stroke="#c9c9c9" stroke-width=".9" fill="none"/><path d="M5.2 3.2 V9.6 L6.6 8.2 L7.6 9.8 L8.4 9.4 L7.4 7.8 L9.2 7.6Z" fill="#c9c9c9"/></svg>
<svg style="left:5.00px;top:86.00px" width="10" height="10" viewBox="0 0 10 10"><path d="M5 .6 L8.4 4.6 L6.6 7.6 H3.4 L1.6 4.6Z" fill="#c9c9c9"/><path d="M5 1.5 V5" stroke="#333" stroke-width=".7"/><circle cx="5" cy="5.2" r=".7" fill="#333"/><path d="M3.4 7.8 L1 9.6" stroke="#c9c9c9" stroke-width=".9"/></svg>
<svg style="left:14.20px;top:95.20px" width="2" height="2"><path d="M1.8 0 V1.8 H0Z" fill="#d0d0d0"/></svg>
<svg style="left:20.30px;top:86.00px" width="10" height="10" viewBox="0 0 10 10"><path d="M6.6 .8 L9.4 3.6 L7.4 6.6 L4.6 6.4 L3.6 3.6Z" fill="#c9c9c9"/><path d="M4 6.6 C1 5 1 9.4 .6 9.4 M3.4 2 C.4 2 .8 6 2 6.6" stroke="#c9c9c9" stroke-width=".8" fill="none"/></svg>
<svg style="left:29.50px;top:95.20px" width="2" height="2"><path d="M1.8 0 V1.8 H0Z" fill="#d0d0d0"/></svg>
<svg style="left:5.00px;top:97.70px" width="10" height="10" viewBox="0 0 10 10"><rect x="4" y="2" width="2" height="7.2" fill="#c9c9c9"/><rect x="1.2" y="1" width="7.6" height="1.6" fill="#c9c9c9"/><rect x="3" y="8.4" width="4" height=".9" fill="#c9c9c9"/></svg>
<svg style="left:14.20px;top:106.90px" width="2" height="2"><path d="M1.8 0 V1.8 H0Z" fill="#d0d0d0"/></svg>
<svg style="left:20.30px;top:97.70px" width="10" height="10" viewBox="0 0 10 10"><path d="M1 8.8 L8.8 1.2" stroke="#c9c9c9" stroke-width=".9"/></svg>
<svg style="left:29.50px;top:106.90px" width="2" height="2"><path d="M1.8 0 V1.8 H0Z" fill="#d0d0d0"/></svg>
<svg style="left:5.00px;top:110.30px" width="10" height="10" viewBox="0 0 10 10"><ellipse cx="5.2" cy="5" rx="4.2" ry="2.6" fill="#6a6a6a" stroke="#9c9c9c" stroke-width=".8"/></svg>
<svg style="left:14.20px;top:119.50px" width="2" height="2"><path d="M1.8 0 V1.8 H0Z" fill="#d0d0d0"/></svg>
<svg style="left:20.30px;top:110.30px" width="10" height="10" viewBox="0 0 10 10"><path d="M1.4 4.6 L3.4 3.4 L6.6 3.8 L8.6 5 V9 H1.4Z" fill="#c9c9c9"/><path d="M3 6.6 C4.2 5 5.6 4 9.2 1.2" stroke="#333" stroke-width="1.1"/><path d="M3 6.6 C4.2 5 5.6 4 9.2 1.2" stroke="#c9c9c9" stroke-width=".5"/></svg>
<svg style="left:29.50px;top:119.50px" width="2" height="2"><path d="M1.8 0 V1.8 H0Z" fill="#d0d0d0"/></svg>
<svg style="left:5.00px;top:122.30px" width="10" height="10" viewBox="0 0 10 10"><path d="M1.4 8.6 L2 6.4 L7.6 .8 L9.2 2.4 L3.6 8Z" fill="#c9c9c9"/></svg>
<svg style="left:14.20px;top:131.50px" width="2" height="2"><path d="M1.8 0 V1.8 H0Z" fill="#d0d0d0"/></svg>
<svg style="left:20.30px;top:122.30px" width="10" height="10" viewBox="0 0 10 10"><path d="M1.2 6 L5.6 1.8 L9 4.6 L4.6 8.6 L1.2 8.6Z" fill="#c9c9c9"/><path d="M2.6 4.6 L6.6 8" stroke="#555" stroke-width=".6"/></svg>
<svg style="left:29.50px;top:131.50px" width="2" height="2"><path d="M1.8 0 V1.8 H0Z" fill="#d0d0d0"/></svg>
<svg style="left:5.00px;top:135.00px" width="10" height="10" viewBox="0 0 10 10"><path d="M8 4.6 A3.4 3.4 0 1 1 5.4 1.2" fill="none" stroke="#c9c9c9" stroke-width=".9" stroke-dasharray="1.2 .8"/><path d="M4.6 0 L6.8 1.3 L4.6 2.6Z" fill="#c9c9c9"/></svg>
<svg style="left:14.20px;top:144.20px" width="2" height="2"><path d="M1.8 0 V1.8 H0Z" fill="#d0d0d0"/></svg>
<svg style="left:20.30px;top:135.00px" width="10" height="10" viewBox="0 0 10 10"><path d="M1 1 L5 5 M9 1 L5 5 M5 5 V8" stroke="#c9c9c9" stroke-width=".8"/><path d="M5 4 L8.8 6.6 L6.4 7.2 L5.2 9.2Z" fill="#c9c9c9"/></svg>
<svg style="left:29.50px;top:144.20px" width="2" height="2"><path d="M1.8 0 V1.8 H0Z" fill="#d0d0d0"/></svg>
<svg style="left:5.00px;top:147.00px" width="10" height="10" viewBox="0 0 10 10"><path d="M1 7 C2 4 3.5 6 4.5 3 C5.5 1 7.5 2 8.5 4 C7 5 6 8 4 8 C3 9 1.5 8.5 1 7Z" fill="#c9c9c9"/><circle cx="3" cy="5.5" r=".8" fill="#333"/><circle cx="6.5" cy="3.8" r=".8" fill="#333"/></svg>
<svg style="left:14.20px;top:156.20px" width="2" height="2"><path d="M1.8 0 V1.8 H0Z" fill="#d0d0d0"/></svg>
<svg style="left:20.30px;top:147.00px" width="10" height="10" viewBox="0 0 10 10"><path d="M1.5 1.5 H8.5 V8.5 H1.5Z" fill="none" stroke="#c9c9c9" stroke-width=".8" stroke-dasharray="1.4 1"/><path d="M2.5 2 V8 L4 6.6 L5 8.6 L5.8 8.2 L4.8 6.2 L6.8 6Z" fill="#c9c9c9"/></svg>
<svg style="left:5.00px;top:158.50px" width="10" height="10" viewBox="0 0 10 10"><ellipse cx="4.2" cy="4.5" rx="3.6" ry="3" fill="#8a8a8a" stroke="#c9c9c9" stroke-width=".7"/><path d="M5 4 V9.6 L6.4 8.2 L7.4 9.8 L8.2 9.4 L7.2 7.8 L9 7.6Z" fill="#c9c9c9"/></svg>
<svg style="left:14.20px;top:167.70px" width="2" height="2"><path d="M1.8 0 V1.8 H0Z" fill="#d0d0d0"/></svg>
<svg style="left:20.30px;top:158.50px" width="10" height="10" viewBox="0 0 10 10"><path d="M.8 .8 V9.2 H9.2" fill="none" stroke="#c9c9c9" stroke-width=".9"/><path d="M2.2 1.2 L8.6 4.4 V9 M2.2 1.2 V9 M2.2 3.5 L8.6 5.8 M2.2 6 L8.6 7.4 M4.4 2.3 V9 M6.5 3.3 V9" stroke="#c9c9c9" stroke-width=".6" fill="none"/></svg>
<svg style="left:29.50px;top:167.70px" width="2" height="2"><path d="M1.8 0 V1.8 H0Z" fill="#d0d0d0"/></svg>
<svg style="left:5.00px;top:172.00px" width="10" height="10" viewBox="0 0 10 10"><rect x="1" y="1.5" width="8" height="7" fill="none" stroke="#c9c9c9" stroke-width=".8"/><path d="M1 4 H9 M1 6.5 H9 M3.5 1.5 V8.5 M6.5 1.5 V8.5" stroke="#c9c9c9" stroke-width=".7"/><rect x="1" y="1.5" width="2.5" height="2.5" fill="#c9c9c9"/><rect x="6.5" y="6.5" width="2.5" height="2" fill="#c9c9c9"/></svg>
<svg style="left:20.30px;top:172.00px" width="10" height="10" viewBox="0 0 10 10"><defs><linearGradient id="tg"><stop offset="0" stop-color="#444"/><stop offset="1" stop-color="#ddd"/></linearGradient></defs><rect x=".8" y="2" width="8.4" height="6" fill="url(#tg)" stroke="#c9c9c9" stroke-width=".8"/></svg>
<svg style="left:5.00px;top:184.00px" width="10" height="10" viewBox="0 0 10 10"><path d="M6.4 1 L8.8 3.4 L3.4 8.8 L1 9 L1.2 6.6Z" fill="#c9c9c9"/><path d="M6.4 4 L3.6 6.8" stroke="#333" stroke-width=".6"/></svg>
<svg style="left:14.20px;top:193.20px" width="2" height="2"><path d="M1.8 0 V1.8 H0Z" fill="#d0d0d0"/></svg>
<svg style="left:20.30px;top:184.00px" width="10" height="10" viewBox="0 0 10 10"><rect x="1" y="1" width="3.4" height="3.4" fill="#c9c9c9"/><path d="M3 3 L6 5.8" stroke="#c9c9c9" stroke-width="1.6"/><circle cx="6.8" cy="6.4" r="2.6" fill="none" stroke="#c9c9c9" stroke-width="1"/></svg>
<svg style="left:5.00px;top:197.30px" width="10" height="10" viewBox="0 0 10 10"><path d="M2.5 3 H7.5 V9 H2.5Z" fill="none" stroke="#c9c9c9" stroke-width=".8"/><circle cx="5" cy="6" r="1.6" fill="#c9c9c9"/><rect x="3.6" y="1.2" width="2.8" height="1.8" fill="#c9c9c9"/><path d="M.6 .6 L1.8 1.8 M2 .2 L2.4 1.2" stroke="#c9c9c9" stroke-width=".7"/></svg>
<svg style="left:14.20px;top:206.50px" width="2" height="2"><path d="M1.8 0 V1.8 H0Z" fill="#d0d0d0"/></svg>
<svg style="left:20.30px;top:197.30px" width="10" height="10" viewBox="0 0 10 10"><path d="M1 1 V9 H9" fill="none" stroke="#c9c9c9" stroke-width=".8"/><rect x="2.4" y="4.6" width="1.6" height="4.2" fill="#c9c9c9"/><rect x="4.8" y="2" width="1.6" height="6.8" fill="#c9c9c9"/><rect x="7.2" y="5.2" width="1.6" height="3.6" fill="#c9c9c9"/></svg>
<svg style="left:29.50px;top:206.50px" width="2" height="2"><path d="M1.8 0 V1.8 H0Z" fill="#d0d0d0"/></svg>
<svg style="left:5.00px;top:210.00px" width="10" height="10" viewBox="0 0 10 10"><rect x="2" y="2" width="6" height="6" fill="#777" stroke="#c9c9c9" stroke-width=".8"/><path d="M0 2 H10 M0 8 H10 M2 0 V10 M8 0 V10" stroke="#c9c9c9" stroke-width=".9"/></svg>
<svg style="left:20.30px;top:210.00px" width="10" height="10" viewBox="0 0 10 10"><path d="M9 1 L3 7 L1.6 9 L4 8 L9.6 2.2Z" fill="#c9c9c9"/><path d="M9 .6 L9.6 1.6" stroke="#c9c9c9" stroke-width=".6"/></svg>
<svg style="left:29.50px;top:219.20px" width="2" height="2"><path d="M1.8 0 V1.8 H0Z" fill="#d0d0d0"/></svg>
<svg style="left:5.00px;top:222.30px" width="10" height="10" viewBox="0 0 10 10"><path d="M2 9.4 C1 8 .8 6 1 4.6 L2 4 V2 L3 1.6 L3.6 4 V1 L4.6 .8 L5 4 V1.2 L6 1.4 L6.2 4.4 L7 2.8 L8 3.2 L7 7 L5.6 9.4Z" fill="#c9c9c9"/></svg>
<svg style="left:14.20px;top:231.50px" width="2" height="2"><path d="M1.8 0 V1.8 H0Z" fill="#d0d0d0"/></svg>
<svg style="left:20.30px;top:222.30px" width="10" height="10" viewBox="0 0 10 10"><circle cx="3.8" cy="3.8" r="2.8" fill="none" stroke="#c9c9c9" stroke-width="1"/><path d="M6 6 L9.2 9.2" stroke="#c9c9c9" stroke-width="1.6"/></svg>
<svg style="left:41.70px;top:60.30px" width="10" height="10" viewBox="0 0 10 10"><path d="M1.4 8.6 L2 6.4 L7 1.4 L8.6 3 L3.6 8Z" fill="#c9c9c9"/><circle cx="8" cy="2" r="1.4" fill="#c9c9c9"/></svg>
<svg style="left:41.70px;top:73.00px" width="10" height="10" viewBox="0 0 10 10"><path d="M9.2 .8 L4.4 6" stroke="#c9c9c9" stroke-width="1.2"/><path d="M4 5.6 C2 6 1.6 8 .6 9.2 C3 9.4 4.8 8.4 5.2 6.6Z" fill="#c9c9c9"/></svg>
<svg style="left:41.70px;top:86.00px" width="10" height="10" viewBox="0 0 10 10"><path d="M1.4 4.6 L3.4 3.4 L6.6 3.8 L8.6 5 V9 H1.4Z" fill="#c9c9c9"/><path d="M3 6.6 C4.2 5 5.6 4 9.2 1.2" stroke="#333" stroke-width="1"/><path d="M3 6.6 C4.2 5 5.6 4 9.2 1.2" stroke="#c9c9c9" stroke-width=".5"/></svg>
<svg style="left:41.70px;top:97.70px" width="10" height="10" viewBox="0 0 10 10"><path d="M1.2 6 L5.6 1.8 L9 4.6 L4.6 8.6 L1.2 8.6Z" fill="#c9c9c9"/><path d="M2.6 4.6 L6.6 8" stroke="#555" stroke-width=".6"/></svg>
<svg style="left:41.70px;top:110.30px" width="10" height="10" viewBox="0 0 10 10"><path d="M1.4 8.6 L2 6.4 L7.6 .8 L9.2 2.4 L3.6 8Z" fill="#c9c9c9"/></svg>
<svg style="left:41.70px;top:122.30px" width="10" height="10" viewBox="0 0 10 10"><path d="M1 1 C3 3 4 5 5 6.5 M1 9 C3 7 4 5 5 3.5" stroke="#c9c9c9" stroke-width="1" fill="none"/><path d="M5 5 L9 1 M6 6.8 L9.4 9" stroke="#c9c9c9" stroke-width="1.2"/></svg>
<svg style="left:41.70px;top:135.00px" width="10" height="10" viewBox="0 0 10 10"><ellipse cx="4.4" cy="4.6" rx="3.8" ry="3.2" fill="#999" stroke="#c9c9c9" stroke-width=".7"/><path d="M1.5 3.5 L7 6.5" stroke="#444" stroke-width=".7"/><path d="M5.2 4.2 V9.8 L6.6 8.4 L7.6 10 L8.4 9.6 L7.4 8 L9.2 7.8Z" fill="#c9c9c9"/></svg>
<svg style="left:40.4px;top:147.6px" width="6" height="6" viewBox="0 0 6 6"><circle cx="3" cy="3" r="2.5" fill="#222" stroke="#ccc" stroke-width=".7"/><circle cx="2.4" cy="2.4" r="1" fill="#eee"/></svg>
<svg style="left:49.5px;top:147.6px" width="6" height="6" viewBox="0 0 6 6"><path d="M1 1.5 H4.5 V5" fill="none" stroke="#ccc" stroke-width=".8"/><path d="M0 1.5 L1.6 .2 V2.8Z M4.5 6 L3.2 4.4 H5.8Z" fill="#ccc"/></svg>
<div class="a" style="left:39.3px;top:157.3px;width:9.4px;height:8.7px;background:#f02b1d;border:.6px solid #ddd"></div>
<svg style="left:45px;top:162px" width="9.4" height="9.4" viewBox="0 0 9.4 9.4"><rect x="0" y="0" width="9.4" height="9.4" fill="#fff"/><rect x="2.4" y="2.4" width="4.6" height="4.6" fill="#333"/><path d="M.4 9 L9 .4" stroke="#e82a1c" stroke-width="1"/></svg>
<div class="a" style="left:3.9px;top:235.9px;width:16.5px;height:16.3px;background:#f22a1b;border:.6px solid #e8e8e8"></div>
<svg style="left:12px;top:244.2px" width="18.2" height="17.2" viewBox="0 0 18.2 17.2"><rect x="0" y="0" width="18.2" height="17.2" fill="#fff"/><rect x="4.9" y="4.4" width="8.3" height="8" fill="#3c3c3c"/><path d="M.6 16.6 L17.6 .6" stroke="#e82a1c" stroke-width="1.3"/></svg>
<svg style="left:24px;top:235px" width="7" height="7" viewBox="0 0 7 7"><path d="M1 1.8 H5 V6" fill="none" stroke="#ccc" stroke-width=".9"/><path d="M0 1.8 L1.8 .2 V3.4Z M5 7 L3.4 5 H6.6Z" fill="#ccc"/></svg>
<svg style="left:3px;top:256px" width="7" height="7" viewBox="0 0 7 7"><rect x="2.4" y="2.4" width="4.2" height="4.2" fill="#222" stroke="#ddd" stroke-width=".8"/><rect x=".4" y=".4" width="4" height="4" fill="#ddd" stroke="#222" stroke-width=".5"/></svg>
<div class="a" style="left:3.9px;top:266.4px;width:29px;height:7.2px;background:#2e2e2e"></div>
<svg style="left:4.5px;top:266.6px" width="8" height="7" viewBox="0 0 8 7"><rect x="1" y=".8" width="6" height="5.4" fill="none" stroke="#e23a2a" stroke-width="1.2"/></svg>
<svg style="left:14.4px;top:266.6px" width="7" height="7"><defs><linearGradient id="gg"><stop offset="0" stop-color="#fff"/><stop offset="1" stop-color="#333"/></linearGradient></defs><rect x=".5" y=".5" width="6" height="6" fill="url(#gg)"/></svg>
<svg style="left:24px;top:266.6px" width="7" height="7"><rect x=".5" y=".5" width="6" height="6" fill="#fff"/><path d="M.5 6.5 L6.5 .5" stroke="#e82a1c" stroke-width="1.2"/></svg>
<div class="a" style="left:3.9px;top:278.5px;width:29px;height:7.2px;background:#363636"></div>
<svg style="left:5.5px;top:278.6px" width="7" height="7"><circle cx="3" cy="3" r="2.2" fill="none" stroke="#999" stroke-width=".8"/><circle cx="4.2" cy="4.2" r="2.2" fill="none" stroke="#bbb" stroke-width=".8"/></svg>
<svg style="left:14.7px;top:278.6px" width="7" height="7"><circle cx="3" cy="3" r="2.2" fill="none" stroke="#999" stroke-width=".8"/><circle cx="4.2" cy="4.2" r="2.2" fill="none" stroke="#bbb" stroke-width=".8"/></svg>
<svg style="left:23.7px;top:278.6px" width="7" height="7"><circle cx="3" cy="3" r="2.2" fill="none" stroke="#999" stroke-width=".8"/><circle cx="4.2" cy="4.2" r="2.2" fill="none" stroke="#bbb" stroke-width=".8"/></svg>
<svg style="left:12.4px;top:290.4px" width="11" height="8" viewBox="0 0 11 8"><rect x=".5" y="2.5" width="7.5" height="5" fill="#555" stroke="#bbb" stroke-width=".7"/><rect x="3" y=".5" width="7.5" height="5" fill="#777" stroke="#ccc" stroke-width=".7"/></svg>
<svg style="left:652.5px;top:47.6px" width="5" height="2.4"><path d="M.2 1.1 L1.7 .1 V2.1Z M2.4 1.1 L3.9 .1 V2.1Z" fill="#a8a8a8"/></svg>
<div class="a" style="left:592px;top:72.5px;width:66px;height:0.9px;background:#333"></div>
<div class="a" style="left:592px;top:120.5px;width:66px;height:0.9px;background:#333"></div>
<div class="a" style="left:592px;top:141px;width:66px;height:0.9px;background:#333"></div>
<div class="a" style="left:592px;top:161.5px;width:66px;height:0.9px;background:#333"></div>
<div class="a" style="left:592px;top:211px;width:66px;height:0.9px;background:#333"></div>
<div class="a" style="left:592px;top:244.5px;width:66px;height:0.9px;background:#333"></div>
<div class="a" style="left:592px;top:293.5px;width:66px;height:0.9px;background:#333"></div>
<div class="a" style="left:592px;top:327px;width:66px;height:0.9px;background:#333"></div>
<div class="a" style="left:592px;top:362.5px;width:66px;height:0.9px;background:#333"></div>
<div class="a" style="left:619px;top:53.6px;width:11px;height:1.2px;background:#1f1f1f"></div>
<div class="a" style="left:619px;top:74.4px;width:11px;height:1.2px;background:#1f1f1f"></div>
<div class="a" style="left:619px;top:122.4px;width:11px;height:1.2px;background:#1f1f1f"></div>
<div class="a" style="left:619px;top:143.0px;width:11px;height:1.2px;background:#1f1f1f"></div>
<div class="a" style="left:619px;top:163.9px;width:11px;height:1.2px;background:#1f1f1f"></div>
<div class="a" style="left:619px;top:212.4px;width:11px;height:1.2px;background:#1f1f1f"></div>
<div class="a" style="left:619px;top:246.6px;width:11px;height:1.2px;background:#1f1f1f"></div>
<div class="a" style="left:619px;top:295.4px;width:11px;height:1.2px;background:#1f1f1f"></div>
<div class="a" style="left:619px;top:329.4px;width:11px;height:1.2px;background:#1f1f1f"></div>
<div class="a t" style="left:610px;top:61.50px;font-size:6.4px;color:#e6e6e6;font-weight:bold;letter-spacing:-.1px;transform:scaleX(.87);transform-origin:0 0">Libraries</div>
<div class="a t" style="left:610px;top:81.90px;font-size:6.4px;color:#e6e6e6;font-weight:bold;letter-spacing:-.1px;transform:scaleX(.87);transform-origin:0 0">Color</div>
<div class="a t" style="left:610px;top:95.80px;font-size:6.4px;color:#e6e6e6;font-weight:bold;letter-spacing:-.1px;transform:scaleX(.87);transform-origin:0 0">Color Guide</div>
<div class="a t" style="left:610px;top:110.00px;font-size:6.4px;color:#e6e6e6;font-weight:bold;letter-spacing:-.1px;transform:scaleX(.87);transform-origin:0 0">Color Themes</div>
<div class="a t" style="left:610px;top:131.10px;font-size:6.4px;color:#e6e6e6;font-weight:bold;letter-spacing:-.1px;transform:scaleX(.87);transform-origin:0 0">Swatches</div>
<div class="a t" style="left:610px;top:150.50px;font-size:6.4px;color:#e6e6e6;font-weight:bold;letter-spacing:-.1px;transform:scaleX(.87);transform-origin:0 0">Gradient</div>
<div class="a t" style="left:610px;top:171.50px;font-size:6.4px;color:#e6e6e6;font-weight:bold;letter-spacing:-.1px;transform:scaleX(.87);transform-origin:0 0">Brushes</div>
<div class="a t" style="left:610px;top:186.20px;font-size:6.4px;color:#e6e6e6;font-weight:bold;letter-spacing:-.1px;transform:scaleX(.87);transform-origin:0 0">Symbols</div>
<div class="a t" style="left:610px;top:199.90px;font-size:6.4px;color:#e6e6e6;font-weight:bold;letter-spacing:-.1px;transform:scaleX(.87);transform-origin:0 0">Graphic Styles</div>
<div class="a t" style="left:610px;top:219.90px;font-size:6.4px;color:#e6e6e6;font-weight:bold;letter-spacing:-.1px;transform:scaleX(.87);transform-origin:0 0">Stroke</div>
<div class="a t" style="left:610px;top:233.90px;font-size:6.4px;color:#e6e6e6;font-weight:bold;letter-spacing:-.1px;transform:scaleX(.87);transform-origin:0 0">Transparency</div>
<div class="a t" style="left:610px;top:254.90px;font-size:6.4px;color:#e6e6e6;font-weight:bold;letter-spacing:-.1px;transform:scaleX(.87);transform-origin:0 0">Transform</div>
<div class="a t" style="left:610px;top:268.50px;font-size:6.4px;color:#e6e6e6;font-weight:bold;letter-spacing:-.1px;transform:scaleX(.87);transform-origin:0 0">Align</div>
<div class="a t" style="left:610px;top:282.50px;font-size:6.4px;color:#e6e6e6;font-weight:bold;letter-spacing:-.1px;transform:scaleX(.87);transform-origin:0 0">Pathfinder</div>
<div class="a t" style="left:610px;top:303.10px;font-size:6.4px;color:#e6e6e6;font-weight:bold;letter-spacing:-.1px;transform:scaleX(.87);transform-origin:0 0">Asset Export</div>
<div class="a t" style="left:610px;top:317.10px;font-size:6.4px;color:#e6e6e6;font-weight:bold;letter-spacing:-.1px;transform:scaleX(.87);transform-origin:0 0">Artboards</div>
<div class="a t" style="left:610px;top:337.10px;font-size:6.4px;color:#e6e6e6;font-weight:bold;letter-spacing:-.1px;transform:scaleX(.87);transform-origin:0 0">Actions</div>
<div class="a t" style="left:610px;top:351.50px;font-size:6.4px;color:#e6e6e6;font-weight:bold;letter-spacing:-.1px;transform:scaleX(.87);transform-origin:0 0">Links</div>
<svg style="left:596px;top:59.00px" width="10" height="10" viewBox="0 0 10 10"><ellipse cx="6" cy="4.5" rx="5.4" ry="3.8" fill="none" stroke="#c8c8c8" stroke-width=".9"/><path d="M3.4 6 C2 5 3.2 2.8 4.8 3.4 C5.6 2.2 7.8 2.6 7.8 4 C9 4.2 8.8 6 7.8 6Z" fill="none" stroke="#c8c8c8" stroke-width=".8"/></svg>
<svg style="left:596px;top:79.40px" width="10" height="10" viewBox="0 0 10 10"><ellipse cx="5.5" cy="5" rx="4.8" ry="3.2" fill="#c8c8c8"/><circle cx="3.4" cy="4.6" r=".9" fill="#444"/><circle cx="5.5" cy="3.4" r=".9" fill="#444"/><circle cx="7.6" cy="4.6" r=".9" fill="#444"/><circle cx="5.5" cy="6.4" r=".9" fill="#444"/></svg>
<svg style="left:596px;top:93.30px" width="10" height="10" viewBox="0 0 10 10"><path d="M1 .5 V9.5 H9 C9 4.5 5.5 1 1 .5Z" fill="#c8c8c8"/><path d="M2.2 3 V8.4 H7.6 C7.2 5.4 5 3.4 2.2 3Z" fill="#777"/></svg>
<svg style="left:596px;top:107.50px" width="10" height="10" viewBox="0 0 10 10"><circle cx="5" cy="5" r="4" fill="none" stroke="#c8c8c8" stroke-width=".9"/><circle cx="3" cy="5" r="1.2" fill="#c8c8c8"/><circle cx="8.6" cy="1.2" r="1" fill="#c8c8c8"/><circle cx="8.6" cy="8.8" r="1" fill="#c8c8c8"/><path d="M3 5 L8.6 1.2 M3 5 L8.6 8.8" stroke="#c8c8c8" stroke-width=".7"/></svg>
<svg style="left:596px;top:128.60px" width="10" height="10" viewBox="0 0 10 10"><rect x=".5" y="1.5" width="9" height="7" fill="none" stroke="#c8c8c8" stroke-width=".8"/><path d="M.5 5 H9.5 M5 1.5 V8.5" stroke="#c8c8c8" stroke-width=".8"/><rect x="1.5" y="2.5" width="2.6" height="1.8" fill="#c8c8c8"/><rect x="6" y="6" width="2.6" height="1.8" fill="#c8c8c8"/></svg>
<svg style="left:596px;top:148.00px" width="10" height="10" viewBox="0 0 10 10"><defs><linearGradient id="mg"><stop offset="0" stop-color="#333"/><stop offset="1" stop-color="#eee"/></linearGradient></defs><rect x=".5" y="1.5" width="9" height="7" fill="url(#mg)" stroke="#c8c8c8" stroke-width=".8"/></svg>
<svg style="left:596px;top:169.00px" width="10" height="10" viewBox="0 0 10 10"><path d="M3.5 4.5 H6.5 V9.5 H3.5Z" fill="#c8c8c8"/><path d="M4.2 4.5 L2 .6 M5 4.5 V.2 M5.8 4.5 L8 .8" stroke="#c8c8c8" stroke-width=".8"/></svg>
<svg style="left:596px;top:183.70px" width="10" height="10" viewBox="0 0 10 10"><circle cx="5" cy="2.6" r="2" fill="#c8c8c8"/><circle cx="2.8" cy="5.4" r="2" fill="#c8c8c8"/><circle cx="7.2" cy="5.4" r="2" fill="#c8c8c8"/><path d="M4.4 5 L3.4 9.6 H6.6 L5.6 5Z" fill="#c8c8c8"/></svg>
<svg style="left:596px;top:197.40px" width="10" height="10" viewBox="0 0 10 10"><rect x="3" y=".5" width="6.5" height="6.5" fill="none" stroke="#c8c8c8" stroke-width=".8"/><rect x=".5" y="3" width="6.5" height="6.5" fill="#555" stroke="#c8c8c8" stroke-width=".8"/><path d="M2 7 L5 4.5" stroke="#c8c8c8" stroke-width=".8"/></svg>
<svg style="left:596px;top:217.40px" width="10" height="10" viewBox="0 0 10 10"><path d="M.5 1.5 H9.5 M.5 5 H9.5 M.5 8.5 H9.5" stroke="#c8c8c8" stroke-width="1"/></svg>
<svg style="left:596px;top:231.40px" width="10" height="10" viewBox="0 0 10 10"><circle cx="4" cy="4.6" r="3.6" fill="#c8c8c8"/><circle cx="6" cy="5.4" r="3.6" fill="#888" stroke="#c8c8c8" stroke-width=".7"/><circle cx="6" cy="5.4" r="1.6" fill="none" stroke="#444" stroke-width=".6"/></svg>
<svg style="left:596px;top:252.40px" width="10" height="10" viewBox="0 0 10 10"><path d="M1 1 H9 V9 H1Z" fill="none" stroke="#c8c8c8" stroke-width=".8" stroke-dasharray="1.2 1"/><rect x=".2" y=".2" width="1.6" height="1.6" fill="#c8c8c8"/><rect x="8.2" y=".2" width="1.6" height="1.6" fill="#c8c8c8"/><rect x=".2" y="8.2" width="1.6" height="1.6" fill="#c8c8c8"/><rect x="8.2" y="8.2" width="1.6" height="1.6" fill="#c8c8c8"/></svg>
<svg style="left:596px;top:266.00px" width="10" height="10" viewBox="0 0 10 10"><path d="M.8 .5 V9.5" stroke="#c8c8c8" stroke-width=".9"/><rect x="2" y="2" width="4" height="2.4" fill="#c8c8c8"/><rect x="2" y="5.8" width="7.5" height="2.4" fill="#c8c8c8"/></svg>
<svg style="left:596px;top:280.00px" width="10" height="10" viewBox="0 0 10 10"><rect x=".5" y=".5" width="5.5" height="5.5" fill="#c8c8c8"/><rect x="4" y="4" width="5.5" height="5.5" fill="none" stroke="#c8c8c8" stroke-width=".9"/><rect x="4" y="4" width="2" height="2" fill="#444"/></svg>
<svg style="left:596px;top:300.60px" width="10" height="10" viewBox="0 0 10 10"><path d="M6 .8 H.8 V9.2 H9.2 V4" fill="none" stroke="#c8c8c8" stroke-width=".9"/><path d="M4 6 L9.2 .8 M6.2 .8 H9.2 V3.8" fill="none" stroke="#c8c8c8" stroke-width=".9"/></svg>
<svg style="left:596px;top:314.60px" width="10" height="10" viewBox="0 0 10 10"><rect x=".5" y=".5" width="6" height="6" fill="none" stroke="#c8c8c8" stroke-width=".8"/><rect x="3.5" y="3.5" width="6" height="6" fill="#434343" stroke="#c8c8c8" stroke-width=".8"/></svg>
<svg style="left:596px;top:334.60px" width="10" height="10" viewBox="0 0 10 10"><path d="M.8 .8 L9.6 5 L.8 9.2 L2.4 5Z" fill="#c8c8c8"/></svg>
<svg style="left:596px;top:349.00px" width="10" height="10" viewBox="0 0 10 10"><rect x=".5" y="2.5" width="4.4" height="5" rx="2" fill="none" stroke="#c8c8c8" stroke-width=".9"/><rect x="5.1" y="2.5" width="4.4" height="5" rx="2" fill="none" stroke="#c8c8c8" stroke-width=".9"/><path d="M3.4 5 H6.6" stroke="#c8c8c8" stroke-width=".8"/></svg>
<svg style="left:792px;top:47.6px" width="5" height="2.4"><path d="M.2 1.1 L1.7 .1 V2.1Z M2.4 1.1 L3.9 .1 V2.1Z" fill="#a8a8a8"/></svg>
<div class="a" style="left:659px;top:52px;width:141px;height:11px;background:#2e2e2e"></div>
<div class="a" style="left:661.3px;top:52px;width:21.7px;height:8.6px;background:#3a3a3a"></div>
<div class="a t" style="left:663px;top:54px;font-size:6.6px;color:#e8e8e8;font-weight:bold;transform:scaleX(.77);transform-origin:0 0">Layers</div>
<svg style="left:784px;top:54px" width="10" height="6" viewBox="0 0 10 6"><rect x="5" y=".3" width="4.6" height="5.4" fill="none" stroke="#999" stroke-width=".6"/><path d="M5 2.1 H9.6 M5 3.9 H9.6 M7.3 .3 V5.7" stroke="#999" stroke-width=".5"/><path d="M1 3 H3.6" stroke="#ccc" stroke-width=".9"/></svg>
<div class="a" style="left:659px;top:60.6px;width:141px;height:3px;background:#3a3a3a"></div>
<div class="a" style="left:662px;top:63.6px;width:134px;height:210px;background:#3c3c3c;border:.6px solid #2c2c2c"></div>
<div class="a" style="left:662.5px;top:63.8px;width:133px;height:9.8px;background:#4d5769"></div>
<div class="a" style="left:672.3px;top:63.8px;width:0.8px;height:9.8px;background:#353535"></div>
<div class="a" style="left:683.3px;top:63.8px;width:0.8px;height:9.8px;background:#353535"></div>
<div class="a" style="left:779.2px;top:63.8px;width:0.8px;height:9.8px;background:#353535"></div>
<svg style="left:663.6px;top:66.10px" width="7" height="5" viewBox="0 0 7 5"><path d="M.3 2.5 C2 -.2 5 -.2 6.7 2.5 C5 5.2 2 5.2 .3 2.5Z" fill="#cfcfcf" stroke="#bbb" stroke-width=".4"/><circle cx="3.5" cy="2.4" r="1.3" fill="#222"/></svg>
<div class="a" style="left:683.7px;top:64.0px;width:2px;height:9.4px;background:#2cc8e8"></div>
<svg style="left:688.20px;top:67.30px" width="5" height="4"><path d="M.2 .2 H4.4 L2.3 3.2Z" fill="#e0e0e0"/></svg>
<div class="a" style="left:697px;top:64.30px;width:8.4px;height:9.00px;background:#fff;border:.6px solid #222"></div>
<svg style="left:698.2px;top:65.6px" width="6" height="6.5"><rect x=".5" y=".8" width="5" height="4" fill="#d4cf22"/><rect x="1.5" y="4.8" width="3" height="1.6" fill="#f02a1c"/><rect x="3" y=".4" width="2" height="2" fill="#f08a1c"/></svg>
<svg style="left:781px;top:65.80px" width="6.4" height="6.4"><circle cx="3.2" cy="3.2" r="2.4" fill="none" stroke="#bdbdbd" stroke-width=".7"/></svg>
<svg style="left:788.4px;top:66.40px" width="5" height="5"><circle cx="2.4" cy="2.4" r="1.9" fill="#2cc8e8" stroke="#1a4f60" stroke-width=".6"/></svg>
<div class="a t" style="left:708.4px;top:65.70px;font-size:6.6px;color:#e2e2e2;transform:scaleX(0.72);transform-origin:0 0">DRAW HERE</div>
<div class="a" style="left:662.5px;top:74.3px;width:133px;height:9.8px;background:#434343"></div>
<div class="a" style="left:672.3px;top:74.3px;width:0.8px;height:9.8px;background:#353535"></div>
<div class="a" style="left:683.3px;top:74.3px;width:0.8px;height:9.8px;background:#353535"></div>
<div class="a" style="left:779.2px;top:74.3px;width:0.8px;height:9.8px;background:#353535"></div>
<svg style="left:663.6px;top:76.60px" width="7" height="5" viewBox="0 0 7 5"><path d="M.3 2.5 C2 -.2 5 -.2 6.7 2.5 C5 5.2 2 5.2 .3 2.5Z" fill="#cfcfcf" stroke="#bbb" stroke-width=".4"/><circle cx="3.5" cy="2.4" r="1.3" fill="#222"/></svg>
<div class="a" style="left:683.7px;top:74.5px;width:2px;height:9.4px;background:#2cc8e8"></div>
<div class="a" style="left:706.8px;top:74.80px;width:8.4px;height:9.00px;background:#fff;border:.6px solid #222"></div>
<svg style="left:707.4px;top:76.69999999999999px" width="7.4" height="5"><rect x="0" y=".6" width="7.4" height="3.8" fill="#f5871a"/></svg>
<svg style="left:781px;top:76.30px" width="6.4" height="6.4"><circle cx="3.2" cy="3.2" r="2.4" fill="none" stroke="#bdbdbd" stroke-width=".7"/></svg>
<div class="a t" style="left:719px;top:76.20px;font-size:6.6px;color:#e2e2e2;transform:scaleX(0.82);transform-origin:0 0">&lt;Path&gt;</div>
<div class="a" style="left:662.5px;top:84.8px;width:133px;height:9.8px;background:#434343"></div>
<div class="a" style="left:672.3px;top:84.8px;width:0.8px;height:9.8px;background:#353535"></div>
<div class="a" style="left:683.3px;top:84.8px;width:0.8px;height:9.8px;background:#353535"></div>
<div class="a" style="left:779.2px;top:84.8px;width:0.8px;height:9.8px;background:#353535"></div>
<svg style="left:663.6px;top:87.10px" width="7" height="5" viewBox="0 0 7 5"><path d="M.3 2.5 C2 -.2 5 -.2 6.7 2.5 C5 5.2 2 5.2 .3 2.5Z" fill="#cfcfcf" stroke="#bbb" stroke-width=".4"/><circle cx="3.5" cy="2.4" r="1.3" fill="#222"/></svg>
<div class="a" style="left:683.7px;top:85.0px;width:2px;height:9.4px;background:#2cc8e8"></div>
<div class="a" style="left:706.8px;top:85.30px;width:8.4px;height:9.00px;background:#fff;border:.6px solid #222"></div>
<svg style="left:707.8px;top:86.19999999999999px" width="6" height="7"><path d="M3.6 .2 L4.6 .4 L2.4 6.6 L1.6 6.4Z" fill="#f02a1c"/></svg>
<svg style="left:781px;top:86.80px" width="6.4" height="6.4"><circle cx="3.2" cy="3.2" r="2.4" fill="none" stroke="#bdbdbd" stroke-width=".7"/></svg>
<div class="a t" style="left:719px;top:86.70px;font-size:6.6px;color:#e2e2e2;transform:scaleX(0.82);transform-origin:0 0">&lt;Path&gt;</div>
<div class="a" style="left:662.5px;top:95.3px;width:133px;height:9.8px;background:#434343"></div>
<div class="a" style="left:672.3px;top:95.3px;width:0.8px;height:9.8px;background:#353535"></div>
<div class="a" style="left:683.3px;top:95.3px;width:0.8px;height:9.8px;background:#353535"></div>
<div class="a" style="left:779.2px;top:95.3px;width:0.8px;height:9.8px;background:#353535"></div>
<svg style="left:663.6px;top:97.60px" width="7" height="5" viewBox="0 0 7 5"><path d="M.3 2.5 C2 -.2 5 -.2 6.7 2.5 C5 5.2 2 5.2 .3 2.5Z" fill="#cfcfcf" stroke="#bbb" stroke-width=".4"/><circle cx="3.5" cy="2.4" r="1.3" fill="#222"/></svg>
<div class="a" style="left:683.7px;top:95.5px;width:2px;height:9.4px;background:#2cc8e8"></div>
<div class="a" style="left:706.8px;top:95.80px;width:8.4px;height:9.00px;background:#fff;border:.6px solid #222"></div>
<svg style="left:707.1999999999999px;top:96.69999999999999px" width="8" height="7"><ellipse cx="4" cy="3.5" rx="3.4" ry="3" fill="none" stroke="#e04020" stroke-width=".8" stroke-dasharray="1.2 .6"/></svg>
<svg style="left:781px;top:97.30px" width="6.4" height="6.4"><circle cx="3.2" cy="3.2" r="2.4" fill="none" stroke="#bdbdbd" stroke-width=".7"/></svg>
<div class="a t" style="left:719px;top:97.20px;font-size:6.6px;color:#e2e2e2;transform:scaleX(0.82);transform-origin:0 0">&lt;Ellipse&gt;</div>
<div class="a" style="left:662.5px;top:105.8px;width:133px;height:9.8px;background:#434343"></div>
<div class="a" style="left:672.3px;top:105.8px;width:0.8px;height:9.8px;background:#353535"></div>
<div class="a" style="left:683.3px;top:105.8px;width:0.8px;height:9.8px;background:#353535"></div>
<div class="a" style="left:779.2px;top:105.8px;width:0.8px;height:9.8px;background:#353535"></div>
<svg style="left:663.6px;top:108.10px" width="7" height="5" viewBox="0 0 7 5"><path d="M.3 2.5 C2 -.2 5 -.2 6.7 2.5 C5 5.2 2 5.2 .3 2.5Z" fill="#cfcfcf" stroke="#bbb" stroke-width=".4"/><circle cx="3.5" cy="2.4" r="1.3" fill="#222"/></svg>
<div class="a" style="left:683.7px;top:106.0px;width:2px;height:9.4px;background:#2cc8e8"></div>
<div class="a" style="left:706.8px;top:106.30px;width:8.4px;height:9.00px;background:#fff;border:.6px solid #222"></div>
<svg style="left:707.1999999999999px;top:107.19999999999999px" width="8" height="7"><ellipse cx="4" cy="3.5" rx="3.4" ry="3" fill="none" stroke="#e04020" stroke-width=".8" stroke-dasharray="1.2 .6"/></svg>
<svg style="left:781px;top:107.80px" width="6.4" height="6.4"><circle cx="3.2" cy="3.2" r="2.4" fill="none" stroke="#bdbdbd" stroke-width=".7"/></svg>
<div class="a t" style="left:719px;top:107.70px;font-size:6.6px;color:#e2e2e2;transform:scaleX(0.82);transform-origin:0 0">&lt;Ellipse&gt;</div>
<div class="a" style="left:662.5px;top:116.3px;width:133px;height:9.8px;background:#434343"></div>
<div class="a" style="left:672.3px;top:116.3px;width:0.8px;height:9.8px;background:#353535"></div>
<div class="a" style="left:683.3px;top:116.3px;width:0.8px;height:9.8px;background:#353535"></div>
<div class="a" style="left:779.2px;top:116.3px;width:0.8px;height:9.8px;background:#353535"></div>
<svg style="left:663.6px;top:118.60px" width="7" height="5" viewBox="0 0 7 5"><path d="M.3 2.5 C2 -.2 5 -.2 6.7 2.5 C5 5.2 2 5.2 .3 2.5Z" fill="#cfcfcf" stroke="#bbb" stroke-width=".4"/><circle cx="3.5" cy="2.4" r="1.3" fill="#222"/></svg>
<div class="a" style="left:683.7px;top:116.5px;width:2px;height:9.4px;background:#2cc8e8"></div>
<div class="a" style="left:706.8px;top:116.80px;width:8.4px;height:9.00px;background:#fff;border:.6px solid #222"></div>
<svg style="left:707.1999999999999px;top:117.69999999999999px" width="8" height="7"><ellipse cx="4" cy="3.5" rx="3.4" ry="3" fill="none" stroke="#e04020" stroke-width=".8" stroke-dasharray="1.2 .6"/></svg>
<svg style="left:781px;top:118.30px" width="6.4" height="6.4"><circle cx="3.2" cy="3.2" r="2.4" fill="none" stroke="#bdbdbd" stroke-width=".7"/></svg>
<div class="a t" style="left:719px;top:118.20px;font-size:6.6px;color:#e2e2e2;transform:scaleX(0.82);transform-origin:0 0">&lt;Ellipse&gt;</div>
<div class="a" style="left:662.5px;top:126.8px;width:133px;height:9.8px;background:#434343"></div>
<div class="a" style="left:672.3px;top:126.8px;width:0.8px;height:9.8px;background:#353535"></div>
<div class="a" style="left:683.3px;top:126.8px;width:0.8px;height:9.8px;background:#353535"></div>
<div class="a" style="left:779.2px;top:126.8px;width:0.8px;height:9.8px;background:#353535"></div>
<svg style="left:663.6px;top:129.10px" width="7" height="5" viewBox="0 0 7 5"><path d="M.3 2.5 C2 -.2 5 -.2 6.7 2.5 C5 5.2 2 5.2 .3 2.5Z" fill="#cfcfcf" stroke="#bbb" stroke-width=".4"/><circle cx="3.5" cy="2.4" r="1.3" fill="#222"/></svg>
<div class="a" style="left:683.7px;top:127.0px;width:2px;height:9.4px;background:#2cc8e8"></div>
<div class="a" style="left:706.8px;top:127.30px;width:8.4px;height:9.00px;background:#fff;border:.6px solid #222"></div>
<svg style="left:707.1999999999999px;top:128.2px" width="8" height="7"><ellipse cx="4" cy="3.5" rx="3.4" ry="3" fill="none" stroke="#e04020" stroke-width=".8" stroke-dasharray="1.2 .6"/></svg>
<svg style="left:781px;top:128.80px" width="6.4" height="6.4"><circle cx="3.2" cy="3.2" r="2.4" fill="none" stroke="#bdbdbd" stroke-width=".7"/></svg>
<div class="a t" style="left:719px;top:128.70px;font-size:6.6px;color:#e2e2e2;transform:scaleX(0.82);transform-origin:0 0">&lt;Ellipse&gt;</div>
<div class="a" style="left:662.5px;top:137.3px;width:133px;height:9.8px;background:#434343"></div>
<div class="a" style="left:672.3px;top:137.3px;width:0.8px;height:9.8px;background:#353535"></div>
<div class="a" style="left:683.3px;top:137.3px;width:0.8px;height:9.8px;background:#353535"></div>
<div class="a" style="left:779.2px;top:137.3px;width:0.8px;height:9.8px;background:#353535"></div>
<svg style="left:663.6px;top:139.60px" width="7" height="5" viewBox="0 0 7 5"><path d="M.3 2.5 C2 -.2 5 -.2 6.7 2.5 C5 5.2 2 5.2 .3 2.5Z" fill="#cfcfcf" stroke="#bbb" stroke-width=".4"/><circle cx="3.5" cy="2.4" r="1.3" fill="#222"/></svg>
<div class="a" style="left:683.7px;top:137.5px;width:2px;height:9.4px;background:#2cc8e8"></div>
<div class="a" style="left:706.8px;top:137.80px;width:8.4px;height:9.00px;background:#fff;border:.6px solid #222"></div>
<svg style="left:707.8px;top:139.10000000000002px" width="6" height="6"><path d="M1 1 L5 5" stroke="#f5a0a0" stroke-width=".4"/></svg>
<svg style="left:781px;top:139.30px" width="6.4" height="6.4"><circle cx="3.2" cy="3.2" r="2.4" fill="none" stroke="#bdbdbd" stroke-width=".7"/></svg>
<div class="a t" style="left:719px;top:139.20px;font-size:6.6px;color:#e2e2e2;transform:scaleX(0.82);transform-origin:0 0">&lt;Path&gt;</div>
<div class="a" style="left:662.5px;top:147.8px;width:133px;height:9.8px;background:#434343"></div>
<div class="a" style="left:672.3px;top:147.8px;width:0.8px;height:9.8px;background:#353535"></div>
<div class="a" style="left:683.3px;top:147.8px;width:0.8px;height:9.8px;background:#353535"></div>
<div class="a" style="left:779.2px;top:147.8px;width:0.8px;height:9.8px;background:#353535"></div>
<svg style="left:663.6px;top:150.10px" width="7" height="5" viewBox="0 0 7 5"><path d="M.3 2.5 C2 -.2 5 -.2 6.7 2.5 C5 5.2 2 5.2 .3 2.5Z" fill="#cfcfcf" stroke="#bbb" stroke-width=".4"/><circle cx="3.5" cy="2.4" r="1.3" fill="#222"/></svg>
<div class="a" style="left:683.7px;top:148.0px;width:2px;height:9.4px;background:#2cc8e8"></div>
<div class="a" style="left:706.8px;top:148.30px;width:8.4px;height:9.00px;background:#fff;border:.6px solid #222"></div>
<svg style="left:707.8px;top:150.60000000000002px" width="6" height="4"><path d="M.5 1 H5.5 M.5 3 H5.5" stroke="#f0a0a0" stroke-width=".4"/></svg>
<svg style="left:781px;top:149.80px" width="6.4" height="6.4"><circle cx="3.2" cy="3.2" r="2.4" fill="none" stroke="#bdbdbd" stroke-width=".7"/></svg>
<div class="a t" style="left:719px;top:149.70px;font-size:6.6px;color:#e2e2e2;transform:scaleX(0.82);transform-origin:0 0">&lt;Path&gt;</div>
<div class="a" style="left:662.5px;top:158.3px;width:133px;height:9.8px;background:#434343"></div>
<div class="a" style="left:672.3px;top:158.3px;width:0.8px;height:9.8px;background:#353535"></div>
<div class="a" style="left:683.3px;top:158.3px;width:0.8px;height:9.8px;background:#353535"></div>
<div class="a" style="left:779.2px;top:158.3px;width:0.8px;height:9.8px;background:#353535"></div>
<svg style="left:663.6px;top:160.60px" width="7" height="5" viewBox="0 0 7 5"><path d="M.3 2.5 C2 -.2 5 -.2 6.7 2.5 C5 5.2 2 5.2 .3 2.5Z" fill="#cfcfcf" stroke="#bbb" stroke-width=".4"/><circle cx="3.5" cy="2.4" r="1.3" fill="#222"/></svg>
<div class="a" style="left:683.7px;top:158.5px;width:2px;height:9.4px;background:#2cc8e8"></div>
<div class="a" style="left:706.8px;top:158.80px;width:8.4px;height:9.00px;background:#fff;border:.6px solid #222"></div>
<svg style="left:707.3px;top:159.70000000000002px" width="7.6" height="7"><rect x=".2" y=".4" width="7.2" height="6.2" fill="#d4c022"/></svg>
<svg style="left:781px;top:160.30px" width="6.4" height="6.4"><circle cx="3.2" cy="3.2" r="2.4" fill="none" stroke="#bdbdbd" stroke-width=".7"/></svg>
<div class="a t" style="left:719px;top:160.20px;font-size:6.6px;color:#e2e2e2;transform:scaleX(0.82);transform-origin:0 0">&lt;Path&gt;</div>
<div class="a" style="left:662.5px;top:168.8px;width:133px;height:9.8px;background:#434343"></div>
<div class="a" style="left:672.3px;top:168.8px;width:0.8px;height:9.8px;background:#353535"></div>
<div class="a" style="left:683.3px;top:168.8px;width:0.8px;height:9.8px;background:#353535"></div>
<div class="a" style="left:779.2px;top:168.8px;width:0.8px;height:9.8px;background:#353535"></div>
<svg style="left:663.6px;top:171.10px" width="7" height="5" viewBox="0 0 7 5"><path d="M.3 2.5 C2 -.2 5 -.2 6.7 2.5 C5 5.2 2 5.2 .3 2.5Z" fill="#cfcfcf" stroke="#bbb" stroke-width=".4"/><circle cx="3.5" cy="2.4" r="1.3" fill="#222"/></svg>
<div class="a" style="left:683.7px;top:169.0px;width:2px;height:9.4px;background:#2cc8e8"></div>
<div class="a" style="left:706.8px;top:169.30px;width:8.4px;height:9.00px;background:#fff;border:.6px solid #222"></div>
<svg style="left:708.4px;top:170.00000000000003px" width="5" height="7.4"><path d="M1.4 .4 H3.6 L3.8 7 H.6Z" fill="#f5871a"/></svg>
<svg style="left:781px;top:170.80px" width="6.4" height="6.4"><circle cx="3.2" cy="3.2" r="2.4" fill="none" stroke="#bdbdbd" stroke-width=".7"/></svg>
<div class="a t" style="left:719px;top:170.70px;font-size:6.6px;color:#e2e2e2;transform:scaleX(0.82);transform-origin:0 0">&lt;Path&gt;</div>
<div class="a" style="left:662.5px;top:179.3px;width:133px;height:9.8px;background:#434343"></div>
<div class="a" style="left:672.3px;top:179.3px;width:0.8px;height:9.8px;background:#353535"></div>
<div class="a" style="left:683.3px;top:179.3px;width:0.8px;height:9.8px;background:#353535"></div>
<div class="a" style="left:779.2px;top:179.3px;width:0.8px;height:9.8px;background:#353535"></div>
<svg style="left:663.6px;top:181.60px" width="7" height="5" viewBox="0 0 7 5"><path d="M.3 2.5 C2 -.2 5 -.2 6.7 2.5 C5 5.2 2 5.2 .3 2.5Z" fill="#cfcfcf" stroke="#bbb" stroke-width=".4"/><circle cx="3.5" cy="2.4" r="1.3" fill="#222"/></svg>
<div class="a" style="left:683.7px;top:179.5px;width:2px;height:9.4px;background:#2cc8e8"></div>
<svg style="left:698.50px;top:181.90px" width="4" height="5"><path d="M.2 .2 V4.6 L3.2 2.4Z" fill="#e0e0e0"/></svg>
<div class="a" style="left:706.8px;top:179.80px;width:8.4px;height:9.00px;background:#fff;border:.6px solid #222"></div>
<svg style="left:707.1999999999999px;top:181.70000000000002px" width="8" height="5"><ellipse cx="4" cy="2.5" rx="3.7" ry="2" fill="#f02a1c"/></svg>
<svg style="left:781px;top:181.30px" width="6.4" height="6.4"><circle cx="3.2" cy="3.2" r="2.4" fill="none" stroke="#bdbdbd" stroke-width=".7"/></svg>
<svg style="left:788.4px;top:181.90px" width="5" height="5"><circle cx="2.4" cy="2.4" r="1.9" fill="#2cc8e8" stroke="#1a4f60" stroke-width=".6"/></svg>
<div class="a t" style="left:719px;top:181.20px;font-size:6.6px;color:#e2e2e2;transform:scaleX(0.82);transform-origin:0 0">&lt;Clip Group&gt;</div>
<div class="a" style="left:662.5px;top:189.8px;width:133px;height:9.8px;background:#434343"></div>
<div class="a" style="left:672.3px;top:189.8px;width:0.8px;height:9.8px;background:#353535"></div>
<div class="a" style="left:683.3px;top:189.8px;width:0.8px;height:9.8px;background:#353535"></div>
<div class="a" style="left:779.2px;top:189.8px;width:0.8px;height:9.8px;background:#353535"></div>
<svg style="left:663.6px;top:192.10px" width="7" height="5" viewBox="0 0 7 5"><path d="M.3 2.5 C2 -.2 5 -.2 6.7 2.5 C5 5.2 2 5.2 .3 2.5Z" fill="#cfcfcf" stroke="#bbb" stroke-width=".4"/><circle cx="3.5" cy="2.4" r="1.3" fill="#222"/></svg>
<div class="a" style="left:683.7px;top:190.0px;width:2px;height:9.4px;background:#3a5ad0"></div>
<svg style="left:674.5px;top:191.40px" width="6" height="7" viewBox="0 0 6 7"><rect x=".5" y="3" width="5" height="3.6" fill="#8a8a8a"/><path d="M1.6 3 V2 A1.4 1.4 0 0 1 4.4 2 V3" fill="none" stroke="#8a8a8a" stroke-width=".8"/></svg>
<svg style="left:688.70px;top:192.40px" width="4" height="5"><path d="M.2 .2 V4.6 L3.2 2.4Z" fill="#e0e0e0"/></svg>
<div class="a" style="left:697px;top:190.30px;width:8.4px;height:9.00px;background:#fff;border:.6px solid #222"></div>
<svg style="left:781px;top:191.80px" width="6.4" height="6.4"><circle cx="3.2" cy="3.2" r="2.4" fill="none" stroke="#bdbdbd" stroke-width=".7"/></svg>
<div class="a t" style="left:708.4px;top:191.70px;font-size:6.6px;color:#e2e2e2;transform:scaleX(0.82);transform-origin:0 0">sketch</div>
<svg style="left:794px;top:63.8px" width="3" height="3"><path d="M0 0 H2.6 V2.6Z" fill="#ddd"/></svg>
<div class="a t" style="left:662px;top:276px;font-size:6.6px;color:#e0e0e0;transform:scaleX(.78);transform-origin:0 0">2 Layers</div>
<svg style="left:727px;top:274.5px" width="7" height="7"><circle cx="4.2" cy="2.8" r="2.2" fill="none" stroke="#c4c4c4" stroke-width=".8"/><path d="M2.6 4.4 L.4 6.6" stroke="#c4c4c4" stroke-width=".9"/></svg>
<svg style="left:740px;top:274.5px" width="7" height="7"><rect x=".5" y=".5" width="5" height="5" fill="none" stroke="#c4c4c4" stroke-width=".7"/><rect x="2" y="2" width="4.5" height="4.5" fill="#777" stroke="#c4c4c4" stroke-width=".6"/></svg>
<svg style="left:753px;top:274.5px" width="8" height="7"><path d="M.5 1 H7.5 V6" fill="none" stroke="#c4c4c4" stroke-width=".9"/><path d="M2.5 3 H6 V6" fill="none" stroke="#c4c4c4" stroke-width=".7"/></svg>
<svg style="left:767px;top:274.5px" width="7" height="7"><rect x=".5" y=".5" width="6" height="6" fill="none" stroke="#c4c4c4" stroke-width=".7"/><rect x="2.5" y="2.5" width="4" height="4" fill="#c4c4c4"/></svg>
<svg style="left:779.5px;top:274px" width="6" height="8"><path d="M.3 1.6 H5.7 M2 .6 H4" stroke="#c4c4c4" stroke-width=".8"/><path d="M1 2.2 H5 L4.6 7.4 H1.4Z" fill="none" stroke="#c4c4c4" stroke-width=".7"/></svg>
<div class="a" style="left:659px;top:283px;width:141px;height:9.6px;background:#2e2e2e"></div>
<div class="a" style="left:661.7px;top:284.6px;width:34.6px;height:8px;background:#3a3a3a"></div>
<div class="a t" style="left:663px;top:286px;font-size:6.6px;color:#e8e8e8;font-weight:bold;transform:scaleX(.79);transform-origin:0 0">Appearance</div>
<svg style="left:784px;top:286px" width="10" height="6" viewBox="0 0 10 6"><rect x="5" y=".3" width="4.6" height="5.4" fill="none" stroke="#999" stroke-width=".6"/><path d="M5 2.1 H9.6 M5 3.9 H9.6 M7.3 .3 V5.7" stroke="#999" stroke-width=".5"/><path d="M1 3 H3.6" stroke="#ccc" stroke-width=".9"/></svg>
<div class="a" style="left:659px;top:292.6px;width:141px;height:3px;background:#3a3a3a"></div>
<div class="a" style="left:661.6px;top:295.7px;width:134.6px;height:141.5px;background:#3d3d3d;border:.6px solid #2c2c2c"></div>
<div class="a" style="left:662.2px;top:296.3px;width:133.4px;height:12.5px;background:#414141"></div>
<div class="a" style="left:663.5px;top:298px;width:9.8px;height:9px;background:#f22a1b;border:.6px solid #ddd"></div>
<div class="a t" style="left:685.8px;top:300.21px;font-size:6.4px;color:#dadada;transform:scaleX(0.88);transform-origin:0 0">Path</div>
<div class="a" style="left:662.2px;top:309px;width:133.4px;height:12.6px;background:#4d5769"></div>
<div class="a" style="left:662.2px;top:309px;width:11.7px;height:12.6px;background:#48526a"></div>
<div class="a" style="left:673.9px;top:309px;width:0.7px;height:12.6px;background:#3a4150"></div>
<svg style="left:664.50px;top:312.80px" width="7" height="5" viewBox="0 0 7 5"><path d="M.3 2.5 C2 -.2 5 -.2 6.7 2.5 C5 5.2 2 5.2 .3 2.5Z" fill="#b8b8b8" stroke="#b8b8b8" stroke-width=".4"/><circle cx="3.5" cy="2.4" r="1.3" fill="#2a2a2a"/></svg>
<svg style="left:676.6px;top:313.5px" width="5" height="4"><path d="M.2 .2 H4.4 L2.3 3.2Z" fill="#e8e8e8"/></svg>
<div class="a t" style="left:685.8px;top:312.71px;font-size:6.4px;color:#e08a30;text-decoration:underline;text-decoration-thickness:.5px;text-underline-offset:1px;transform:scaleX(0.83);transform-origin:0 0">Stroke:</div>
<svg style="left:706px;top:310.4px" width="9" height="9.5" viewBox="0 0 9 9.5"><rect x=".3" y=".3" width="8.4" height="8.9" fill="#fff" stroke="#bbb" stroke-width=".6"/><path d="M1 8.6 L8 .9" stroke="#e82a1c" stroke-width="1"/></svg>
<div class="a" style="left:716.4px;top:310.6px;width:6px;height:9px;background:#3c3c3c;border:.5px solid #666"></div>
<svg style="left:717.6px;top:314px" width="4" height="3"><path d="M0 .2 H3.4 L1.7 2.2Z" fill="#e0e0e0"/></svg>
<div class="a" style="left:725.9px;top:310.6px;width:7px;height:9px;background:#444;border:.5px solid #666"></div>
<svg style="left:727.4px;top:311.6px" width="4" height="7"><path d="M.2 2.6 H3.8 L2 .4Z M.2 4.4 H3.8 L2 6.6Z" fill="#dcdcdc"/></svg>
<div class="a" style="left:734.4px;top:311px;width:19.3px;height:8.6px;background:#a0a0a0"></div>
<div class="a" style="left:755.2px;top:310.6px;width:6px;height:9px;background:#3c3c3c;border:.5px solid #666"></div>
<svg style="left:756.4px;top:314px" width="4" height="3"><path d="M0 .2 H3.4 L1.7 2.2Z" fill="#e0e0e0"/></svg>
<div class="a" style="left:662.2px;top:321.8px;width:133.4px;height:11.6px;background:#4a4a4a"></div>
<div class="a" style="left:662.2px;top:321.8px;width:11.7px;height:11.6px;background:#434343"></div>
<div class="a" style="left:673.9px;top:321.8px;width:0.7px;height:11.6px;background:#3a3a3a"></div>
<svg style="left:664.50px;top:325.00px" width="7" height="5" viewBox="0 0 7 5"><path d="M.3 2.5 C2 -.2 5 -.2 6.7 2.5 C5 5.2 2 5.2 .3 2.5Z" fill="#5e5e5e" stroke="#5e5e5e" stroke-width=".4"/><circle cx="3.5" cy="2.4" r="1.3" fill="#2a2a2a"/></svg>
<div class="a t" style="left:695.6px;top:324.71px;font-size:6.4px;color:#e08a30;text-decoration:underline;text-decoration-thickness:.5px;text-underline-offset:1px;transform:scaleX(0.82);transform-origin:0 0">Opacity:</div>
<div class="a t" style="left:717px;top:324.71px;font-size:6.4px;color:#dadada;transform:scaleX(0.88);transform-origin:0 0">Default</div>
<div class="a" style="left:662.2px;top:333.6px;width:133.4px;height:12.6px;background:#414141"></div>
<div class="a" style="left:673.9px;top:333.6px;width:0.7px;height:12.6px;background:#383838"></div>
<svg style="left:664.50px;top:337.50px" width="7" height="5" viewBox="0 0 7 5"><path d="M.3 2.5 C2 -.2 5 -.2 6.7 2.5 C5 5.2 2 5.2 .3 2.5Z" fill="#b8b8b8" stroke="#b8b8b8" stroke-width=".4"/><circle cx="3.5" cy="2.4" r="1.3" fill="#2a2a2a"/></svg>
<svg style="left:676.6px;top:338.4px" width="5" height="4"><path d="M.2 .2 H4.4 L2.3 3.2Z" fill="#e8e8e8"/></svg>
<div class="a t" style="left:685.8px;top:337.31px;font-size:6.4px;color:#dadada;transform:scaleX(0.88);transform-origin:0 0">Fill:</div>
<div class="a" style="left:707px;top:336px;width:8.9px;height:8.6px;background:#8a8a8a;border:.8px solid #b0b0b0"></div>
<div class="a" style="left:709.2px;top:338px;width:4.5px;height:4.5px;background:#f02a1c"></div>
<div class="a" style="left:662.2px;top:346.3px;width:133.4px;height:11.7px;background:#4a4a4a"></div>
<div class="a" style="left:662.2px;top:346.3px;width:11.7px;height:11.7px;background:#434343"></div>
<div class="a" style="left:673.9px;top:346.3px;width:0.7px;height:11.7px;background:#3a3a3a"></div>
<svg style="left:664.50px;top:349.70px" width="7" height="5" viewBox="0 0 7 5"><path d="M.3 2.5 C2 -.2 5 -.2 6.7 2.5 C5 5.2 2 5.2 .3 2.5Z" fill="#5e5e5e" stroke="#5e5e5e" stroke-width=".4"/><circle cx="3.5" cy="2.4" r="1.3" fill="#2a2a2a"/></svg>
<div class="a t" style="left:695.6px;top:349.71px;font-size:6.4px;color:#e08a30;text-decoration:underline;text-decoration-thickness:.5px;text-underline-offset:1px;transform:scaleX(0.82);transform-origin:0 0">Opacity:</div>
<div class="a t" style="left:717px;top:349.71px;font-size:6.4px;color:#dadada;transform:scaleX(0.88);transform-origin:0 0">Default</div>
<div class="a" style="left:662.2px;top:358.1px;width:133.4px;height:12.2px;background:#414141"></div>
<div class="a" style="left:673.9px;top:358.1px;width:0.7px;height:12.2px;background:#383838"></div>
<svg style="left:664.50px;top:362.30px" width="7" height="5" viewBox="0 0 7 5"><path d="M.3 2.5 C2 -.2 5 -.2 6.7 2.5 C5 5.2 2 5.2 .3 2.5Z" fill="#5e5e5e" stroke="#5e5e5e" stroke-width=".4"/><circle cx="3.5" cy="2.4" r="1.3" fill="#2a2a2a"/></svg>
<div class="a t" style="left:685.8px;top:362.51px;font-size:6.4px;color:#e08a30;text-decoration:underline;text-decoration-thickness:.5px;text-underline-offset:1px;transform:scaleX(0.82);transform-origin:0 0">Opacity:</div>
<div class="a t" style="left:707.4px;top:362.51px;font-size:6.4px;color:#dadada;transform:scaleX(0.88);transform-origin:0 0">Default</div>
<div class="a" style="left:662.2px;top:371.2px;width:133.4px;height:0.8px;background:#333"></div>
<svg style="left:665.4px;top:440px" width="5" height="5"><rect x=".5" y=".5" width="4" height="4" fill="none" stroke="#bdbdbd" stroke-width="1"/></svg>
<svg style="left:678px;top:440px" width="5.5" height="5"><rect x=".3" y=".3" width="4.8" height="4.4" fill="#777" stroke="#bdbdbd" stroke-width=".5"/><rect x="1.6" y="1.4" width="2.2" height="2.2" fill="#bdbdbd"/></svg>
<div class="a t" style="left:689.5px;top:438.6px;font-size:7px;color:#bdbdbd;font-style:italic;font-family:&quot;Liberation Serif&quot;,serif">fx</div>
<svg style="left:753px;top:439px" width="7.5" height="7.5"><circle cx="3.75" cy="3.75" r="3" fill="none" stroke="#bdbdbd" stroke-width=".8"/><path d="M2 2 L5.5 5.5" stroke="#bdbdbd" stroke-width=".8"/></svg>
<svg style="left:765.5px;top:439px" width="8" height="7"><rect x=".5" y=".5" width="6" height="6" fill="none" stroke="#bdbdbd" stroke-width=".7"/><rect x="2.5" y="2.5" width="4" height="4" fill="#bdbdbd"/></svg>
<svg style="left:779.5px;top:438.5px" width="6" height="8"><path d="M.3 1.6 H5.7 M2 .6 H4" stroke="#bdbdbd" stroke-width=".8"/><path d="M1 2.2 H5 L4.6 7.4 H1.4Z" fill="none" stroke="#bdbdbd" stroke-width=".7"/></svg>
<div class="a t" style="left:728.8px;top:400.6px;font-size:30px;color:#f62b20;font-weight:bold;letter-spacing:-1.8px;-webkit-text-stroke:1.1px #f62b20;transform:scaleX(1.22);transform-origin:0 0">yes</div>
<div class="a t" style="left:741px;top:426.6px;font-size:6px;color:#fff;font-weight:bold;letter-spacing:-.15px;-webkit-text-stroke:.25px #fff">I’M A DESIGNER</div>
<div class="a" style="left:60px;top:440px;width:25px;height:7px;background:#9d9d9d"></div>
<div class="a t" style="left:61px;top:440.8px;font-size:6px;color:#222;transform:scaleX(.85);transform-origin:0 0">400%</div>
<div class="a" style="left:87px;top:440px;width:6.4px;height:7px;background:#505050"></div>
<svg style="left:88.4px;top:442.4px" width="4" height="3"><path d="M0 .2 H3.6 L1.8 2.4Z" fill="#e8e8e8"/></svg>
<svg style="left:98px;top:440.6px" width="14" height="6"><path d="M.6 .4 V5.6" stroke="#6a6a6a" stroke-width=".8"/><path d="M4.6 .4 L1.4 3 L4.6 5.6Z M11 .4 L7.8 3 L11 5.6Z" fill="#6a6a6a"/></svg>
<div class="a" style="left:115.5px;top:440px;width:19.5px;height:7px;background:#9d9d9d"></div>
<div class="a t" style="left:116.5px;top:440.8px;font-size:6px;color:#222">1</div>
<div class="a" style="left:137px;top:440px;width:6.4px;height:7px;background:#505050"></div>
<svg style="left:138.4px;top:442.4px" width="4" height="3"><path d="M0 .2 H3.6 L1.8 2.4Z" fill="#e8e8e8"/></svg>
<svg style="left:148px;top:440.6px" width="14" height="6"><path d="M12.4 .4 V5.6" stroke="#6a6a6a" stroke-width=".8"/><path d="M1 .4 L4.2 3 L1 5.6Z M7.6 .4 L10.8 3 L7.6 5.6Z" fill="#6a6a6a"/></svg>
<div class="a t" style="left:205.5px;top:440.6px;font-size:6.2px;color:#cfcfcf;transform:scaleX(.9);transform-origin:0 0">Ellipse</div>
<svg style="left:267px;top:440.6px" width="4" height="6"><path d="M.4 .4 V5.6 L3.4 3Z" fill="#e0e0e0"/></svg>
<svg style="left:276.5px;top:440.6px" width="4" height="6"><path d="M3.6 .4 V5.6 L.6 3Z" fill="#e0e0e0"/></svg>
<div class="a" style="left:283px;top:439px;width:300px;height:8px;background:#2c2c2c"></div>
<div class="a" style="left:419px;top:439.5px;width:6.6px;height:7px;background:#8a8a8a"></div>
<svg style="left:576px;top:440.6px" width="4" height="6"><path d="M.4 .4 V5.6 L3.4 3Z" fill="#e0e0e0"/></svg>
<svg style="left:584.2px;top:58.8px" width="5" height="4"><path d="M.3 3.6 H4.8 L2.55 .6Z" fill="#e0e0e0"/></svg>
<svg style="left:584.2px;top:432.6px" width="5" height="4"><path d="M.3 .4 H4.8 L2.55 3.4Z" fill="#e0e0e0"/></svg>
<div class="a" style="left:582.7px;top:241px;width:8px;height:7.3px;background:#8a8a8a"></div>
</body></html>
